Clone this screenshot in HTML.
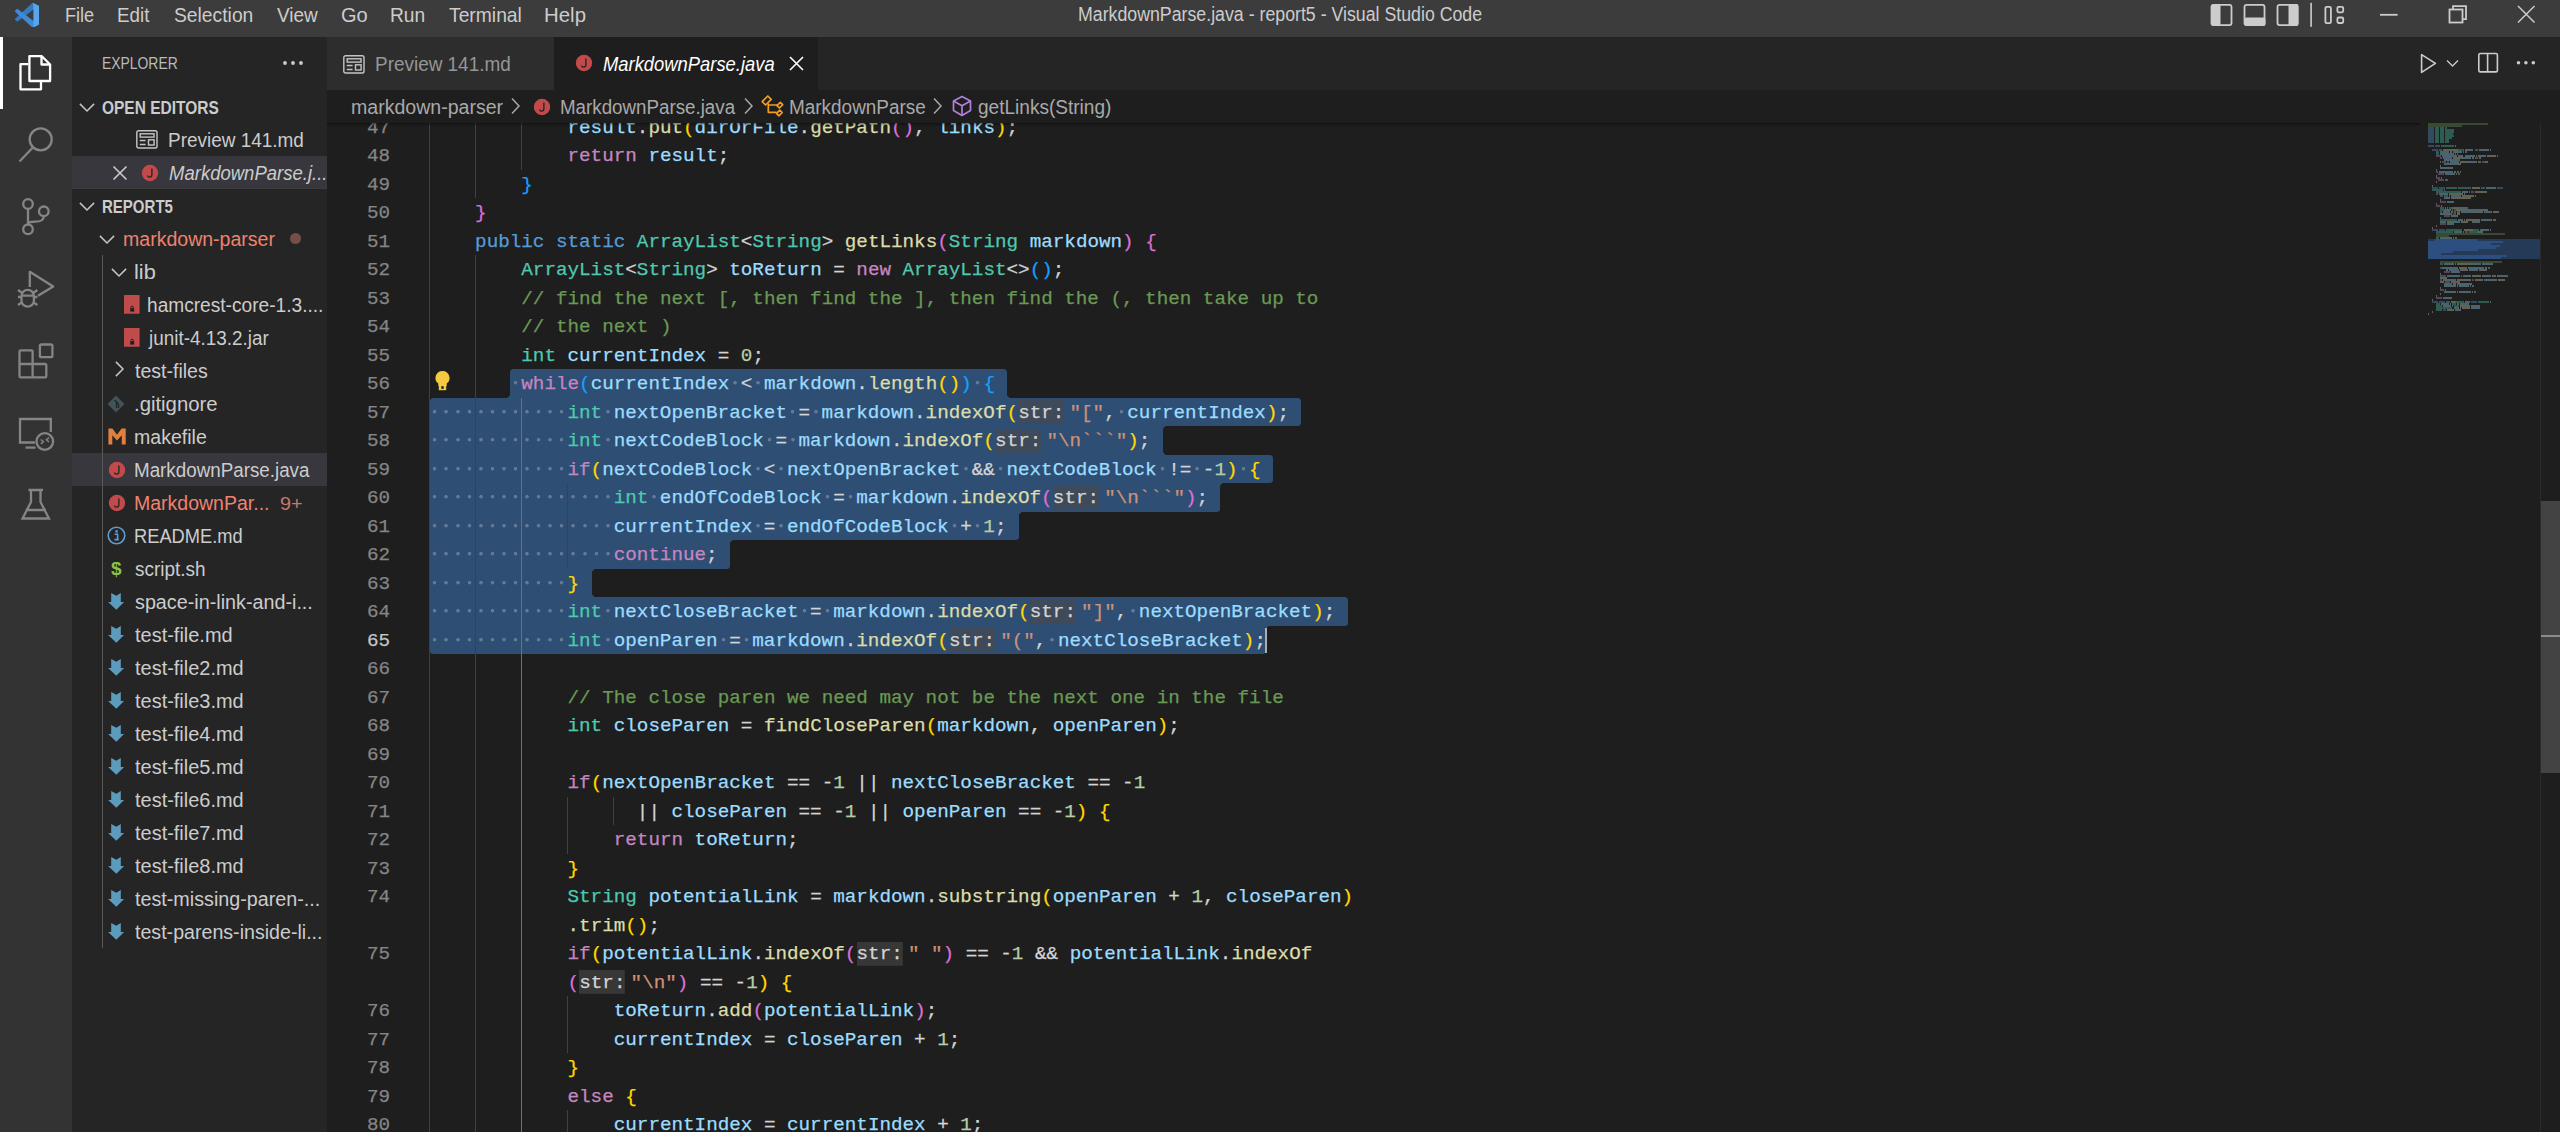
<!DOCTYPE html>
<html><head><meta charset="utf-8"><title>VS Code</title><style>
*{margin:0;padding:0;box-sizing:border-box}
html,body{width:2560px;height:1132px;overflow:hidden;background:#1e1e1e;font-family:"Liberation Sans", sans-serif}
.a{position:absolute}
.t{position:absolute;white-space:pre;font-family:"Liberation Sans", sans-serif}
#title{left:0;top:0;width:2560px;height:37px;background:#3c3c3c}
.menu{position:absolute;top:0;height:37px;line-height:37px;font-size:19px;color:#cccccc;white-space:pre}
#act{left:0;top:37px;width:72px;height:1095px;background:#333333}
#side{left:72px;top:37px;width:255px;height:1095px;background:#252526}
#tabs{left:327px;top:37px;width:2233px;height:53px;background:#252526}
#crumbs{left:327px;top:90px;width:2233px;height:33px;background:#1e1e1e}
.row{position:absolute;left:72px;width:255px;height:33px}
.rt{position:absolute;top:0;height:33px;line-height:33px;font-size:18.7px;color:#cccccc;white-space:pre}
.cl{position:absolute;left:428.9px;height:28.5px;line-height:28.5px;font-family:"Liberation Mono", monospace;font-size:19.25px;white-space:pre;color:#D4D4D4;-webkit-text-stroke:0.25px currentColor}
.ln{position:absolute;left:330px;width:60px;text-align:right;height:28.5px;line-height:28.5px;font-family:"Liberation Mono", monospace;font-size:19.25px;color:#858585;white-space:pre;-webkit-text-stroke:0.25px currentColor}
.ln.act{color:#c6c6c6}
.sel{position:absolute;height:28.5px;background:#2f4e74;border-radius:3px}
.ig{position:absolute;width:1px;background:#404040}
.ig.act{background:#707070}
.ws{display:inline-block;width:11.548px;height:28.5px;vertical-align:top;background:radial-gradient(circle at 50% 12.7px,rgba(200,205,215,0.34) 1.4px,rgba(200,205,215,0) 2.1px)}
.hint{display:inline-block;width:51.5px;height:28.5px;vertical-align:top;position:relative}
.hint i{position:absolute;left:0.2px;top:0;width:46px;height:28.5px;line-height:28.5px;font-style:normal;color:#d4d4d4;background:linear-gradient(rgba(72,72,72,0.6),rgba(72,72,72,0.6)) no-repeat 0 1.5px/45.8px 23.8px}
</style></head><body>
<div id="title" class="a">
<svg class="a" style="left:14.5px;top:2.8px" width="24.5" height="24.5" viewBox="0 0 100 100"><path fill="#3479c2" d="M96.4614 10.7962L75.8569 0.875542C73.4719 -0.272773 70.6217 0.211611 68.75 2.08333L1.29858 63.5832C-0.515693 65.2373 -0.513607 68.0937 1.30308 69.7452L6.81272 74.754C8.29793 76.1042 10.5347 76.2036 12.1338 74.9905L93.3609 13.3699C96.086 11.3026 100 13.2462 100 16.6667V16.4275C100 14.0265 98.6246 11.8378 96.4614 10.7962Z"/><path fill="#3f8ad6" d="M96.4614 89.2038L75.8569 99.1245C73.4719 100.273 70.6217 99.7884 68.75 97.9167L1.29858 36.4169C-0.515693 34.7627 -0.513607 31.9063 1.30308 30.2548L6.81272 25.246C8.29793 23.8958 10.5347 23.7964 12.1338 25.0095L93.3609 86.6301C96.086 88.6974 100 86.7538 100 83.3334V83.5726C100 85.9735 98.6246 88.1622 96.4614 89.2038Z"/><path fill="#58a6ee" d="M75.8578 99.1263C73.4721 100.274 70.6219 99.7885 68.75 97.9166C71.0564 100.223 75 98.5895 75 95.3278V4.67213C75 1.41039 71.0564 -0.223106 68.75 2.08329C70.6219 0.211402 73.4721 -0.273666 75.8578 0.873633L96.4587 10.7807C98.6234 11.8217 100 14.0112 100 16.4132V83.5871C100 85.9893 98.6234 88.1788 96.4586 89.2198L75.8578 99.1263Z"/></svg>
<div class="t" style="left:64.83px;top:4.51px;font-size:20.78px;line-height:1;color:#cccccc;transform:scaleX(0.8719);transform-origin:0 0;">File</div>
<div class="t" style="left:117.39px;top:4.51px;font-size:20.78px;line-height:1;color:#cccccc;transform:scaleX(0.9057);transform-origin:0 0;">Edit</div>
<div class="t" style="left:173.67px;top:4.51px;font-size:20.78px;line-height:1;color:#cccccc;transform:scaleX(0.9286);transform-origin:0 0;">Selection</div>
<div class="t" style="left:276.50px;top:4.51px;font-size:20.78px;line-height:1;color:#cccccc;transform:scaleX(0.9133);transform-origin:0 0;">View</div>
<div class="t" style="left:340.73px;top:4.51px;font-size:20.78px;line-height:1;color:#cccccc;transform:scaleX(0.9654);transform-origin:0 0;">Go</div>
<div class="t" style="left:389.97px;top:4.51px;font-size:20.78px;line-height:1;color:#cccccc;transform:scaleX(0.9250);transform-origin:0 0;">Run</div>
<div class="t" style="left:448.80px;top:4.51px;font-size:20.78px;line-height:1;color:#cccccc;transform:scaleX(0.9286);transform-origin:0 0;">Terminal</div>
<div class="t" style="left:543.92px;top:4.51px;font-size:20.78px;line-height:1;color:#cccccc;transform:scaleX(0.9829);transform-origin:0 0;">Help</div>
<div class="t" style="left:1077.98px;top:4.64px;font-size:19.33px;line-height:1;color:#cccccc;transform:scaleX(0.9182);transform-origin:0 0;">MarkdownParse.java - report5 - Visual Studio Code</div>
<svg class="a" style="left:2200px;top:0" width="360" height="37" viewBox="0 0 360 37">
<g fill="none" stroke="#cccccc" stroke-width="1.8">
<rect x="11.5" y="4.9" width="20" height="20.2" rx="2"/>
<rect x="44.5" y="4.9" width="20" height="20.2" rx="2"/>
<rect x="77.5" y="4.9" width="20" height="20.2" rx="2"/>
<rect x="125.4" y="6.8" width="5.5" height="16.3" rx="1.2"/>
<rect x="137.4" y="6.8" width="5.8" height="5.5" rx="1.2"/>
<rect x="137.4" y="17.5" width="5.8" height="5.5" rx="1.2"/>
<path d="M180 14.8h17.6M2517.8 5.9" />
<rect x="249.5" y="9.5" width="13" height="13"/>
<path d="M253 9.5V6.2h13v13h-3.3"/>
<path d="M318 6l16.5 16.5M334.5 6L318 22.5" stroke-width="1.5"/>
</g>
<g fill="#cccccc">
<rect x="11.5" y="4" width="9" height="22" rx="2"/>
<rect x="44.5" y="17.5" width="21" height="8.5" rx="2"/>
<rect x="88.5" y="4" width="10" height="22" rx="2"/>
<rect x="110.3" y="2.8" width="1.6" height="24"/>
</g>
</svg>
</div>
<div id="act" class="a">
<div class="a" style="left:0;top:0;width:3px;height:72px;background:#ffffff"></div>
<svg class="a" style="left:0;top:0" width="72" height="520" viewBox="0 37 72 520">
<g fill="none" stroke="#ffffff" stroke-width="2.3" stroke-linejoin="round">
<path d="M28.3 64.2 H20.5 V89.3 H41 V82"/>
<path d="M29.4 56.2 H41.8 L50.1 64.5 V81 H29.4 Z"/>
<path d="M41.5 56.5 V64.5 H49.8"/>
</g>
<g fill="none" stroke="#858585" stroke-width="2.3">
<circle cx="40.7" cy="139.4" r="11"/>
<path d="M32.8 147.5 L19.5 161.5"/>
<circle cx="28" cy="204" r="4.8"/>
<circle cx="28" cy="229.3" r="4.8"/>
<circle cx="43.8" cy="211.3" r="4.8"/>
<path d="M28 208.8 V224.5 M43.8 216.1 C43.8 221 40 221.7 35 221.7 C31 221.7 28 222.5 28 224.5"/>
<path d="M29.8 287 V271.8 L53.2 286.5 L38 295.8" stroke-linejoin="round"/>
<path d="M21.5 296 a6.2 6.2 0 0 1 12.4 0 v4.5 a6.2 6.2 0 0 1 -12.4 0 Z M18 297 h3.5 M33.9 297 h3.5 M18 305 l3.8 -2.5 M37.4 305 l-3.8 -2.5 M18 290 l3.5 2.5 M37.4 290 l-3.5 2.5 M21.8 295.6 H33.6"/>
<path d="M32.6 364 V351.5 a1.2 1.2 0 0 0 -1.2 -1.2 H20.7 a1.2 1.2 0 0 0 -1.2 1.2 V376.2 a1.2 1.2 0 0 0 1.2 1.2 H45.1 a1.2 1.2 0 0 0 1.2 -1.2 V365.2 a1.2 1.2 0 0 0 -1.2 -1.2 Z M19.5 364 H32.6 V377.4"/>
<rect x="39.9" y="344.5" width="12.5" height="12.7" rx="1.5"/>
<path d="M35 442.5 H20 V419 H50.8 V432" />
<path d="M25.5 447.6 H35.5" />
<circle cx="44.8" cy="441.5" r="8.3"/>
<path d="M40.8 439.5 l2.6 2.2 -2.6 2.2 M49 437.6 l-2.6 2.2 2.6 2.2" stroke-width="1.5"/>
<path d="M28.5 490 H43 M31 490 V502 L22.5 518.5 H49 L40.5 502 V490 M25.5 510 H46"/>
</g>
</svg>
</div>
<div id="side" class="a"></div>
<div class="t" style="left:101.98px;top:56.33px;font-size:16.86px;line-height:1;color:#bbbbbb;transform:scaleX(0.8244);transform-origin:0 0;">EXPLORER</div>
<svg class="a" style="left:280px;top:58px" width="26" height="10"><g fill="#cccccc"><circle cx="5" cy="5" r="1.9"/><circle cx="13" cy="5" r="1.9"/><circle cx="21" cy="5" r="1.9"/></g></svg>
<svg class="a" style="left:78.0px;top:101.0px" width="18" height="12"><path d="M1.9 2.9 L9 10 L16.1 2.9" fill="none" stroke="#c5c5c5" stroke-width="1.5"/></svg>
<div class="t" style="left:102.10px;top:99.14px;font-size:18.02px;line-height:1;color:#cccccc;font-weight:bold;transform:scaleX(0.8596);transform-origin:0 0;">OPEN EDITORS</div>
<svg class="a" style="left:136.4px;top:130.0px" width="22" height="19" viewBox="0 0 22 19"><g fill="none" stroke="#c5c5c5" stroke-width="1.4"><rect x="0.8" y="0.8" width="20.2" height="17.2" rx="1.8"/><rect x="4.2" y="3.8" width="13.8" height="3.3"/><rect x="12.5" y="9.8" width="5.6" height="5.2"/><path d="M3.8 10.5h5.8M3.8 14.5h5.8"/></g></svg>
<div class="t" style="left:167.72px;top:131.04px;font-size:19.33px;line-height:1;color:#cccccc;transform:scaleX(0.9803);transform-origin:0 0;">Preview 141.md</div>
<div class="a" style="left:72px;top:156px;width:255px;height:33px;background:#37373d"></div>
<svg class="a" style="left:112px;top:165.0px" width="16" height="16"><path d="M1.5 1.5L14.5 14.5M14.5 1.5L1.5 14.5" stroke="#cccccc" stroke-width="1.6"/></svg>
<svg class="a" style="left:141.0px;top:163.5px" width="18" height="18" viewBox="0 0 20 20"><circle cx="10" cy="10" r="9.1" fill="#c24a4a"/><path d="M12.1 5.6 V12 Q12.1 14.6 9.6 14.6 Q8.1 14.6 7.4 13.3" fill="none" stroke="#252526" stroke-width="1.5" stroke-linecap="round"/></svg>
<div class="t" style="left:168.50px;top:164.04px;font-size:19.33px;line-height:1;color:#cccccc;font-style:italic;transform:scaleX(0.9577);transform-origin:0 0;">MarkdownParse.j...</div>
<div class="a" style="left:72px;top:188px;width:255px;height:1px;background:#3c3c3c"></div>
<svg class="a" style="left:78.0px;top:200.0px" width="18" height="12"><path d="M1.9 2.9 L9 10 L16.1 2.9" fill="none" stroke="#c5c5c5" stroke-width="1.5"/></svg>
<div class="t" style="left:101.67px;top:198.14px;font-size:18.02px;line-height:1;color:#cccccc;font-weight:bold;transform:scaleX(0.8333);transform-origin:0 0;">REPORT5</div>
<svg class="a" style="left:97.5px;top:233.0px" width="18" height="12"><path d="M1.9 2.9 L9 10 L16.1 2.9" fill="none" stroke="#c5c5c5" stroke-width="1.5"/></svg>
<div class="t" style="left:123.39px;top:230.04px;font-size:19.33px;line-height:1;color:#f0826e;transform:scaleX(1.0107);transform-origin:0 0;">markdown-parser</div>
<div class="a" style="left:289.7px;top:232.7px;width:11.6px;height:11.6px;border-radius:50%;background:#744f49"></div>
<svg class="a" style="left:109.5px;top:266.0px" width="18" height="12"><path d="M1.9 2.9 L9 10 L16.1 2.9" fill="none" stroke="#c5c5c5" stroke-width="1.5"/></svg>
<div class="t" style="left:134.07px;top:263.04px;font-size:19.33px;line-height:1;color:#cccccc;transform:scaleX(1.1278);transform-origin:0 0;">lib</div>
<svg class="a" style="left:123.7px;top:295.0px" width="16" height="19"><rect x="0" y="0" width="15.6" height="18.8" rx="0.6" fill="#bf4b4b"/><rect x="6.2" y="13.2" width="4" height="3.4" fill="#1e1e1e"/><path d="M7 13.2v-0.8a1.2 1.2 0 0 1 2.4 0v0.8" stroke="#1e1e1e" stroke-width="1" fill="none"/></svg>
<div class="t" style="left:146.81px;top:296.04px;font-size:19.33px;line-height:1;color:#cccccc;transform:scaleX(0.9892);transform-origin:0 0;">hamcrest-core-1.3....</div>
<svg class="a" style="left:123.7px;top:328.0px" width="16" height="19"><rect x="0" y="0" width="15.6" height="18.8" rx="0.6" fill="#bf4b4b"/><rect x="6.2" y="13.2" width="4" height="3.4" fill="#1e1e1e"/><path d="M7 13.2v-0.8a1.2 1.2 0 0 1 2.4 0v0.8" stroke="#1e1e1e" stroke-width="1" fill="none"/></svg>
<div class="t" style="left:148.78px;top:329.04px;font-size:19.33px;line-height:1;color:#cccccc;transform:scaleX(0.9774);transform-origin:0 0;">junit-4.13.2.jar</div>
<svg class="a" style="left:112.5px;top:360.3px" width="12" height="18"><path d="M2.9 1.9 L10 9 L2.9 16.1" fill="none" stroke="#c5c5c5" stroke-width="1.5"/></svg>
<div class="t" style="left:135.20px;top:362.04px;font-size:19.33px;line-height:1;color:#cccccc;transform:scaleX(1.0111);transform-origin:0 0;">test-files</div>
<svg class="a" style="left:107px;top:394.5px" width="18" height="18"><path d="M9 0.5 L17.5 9 L9 17.5 L0.5 9Z" fill="#41535b"/><path d="M7.5 5 L11.5 9 V13 M9.5 7v6" stroke="#252526" stroke-width="1.3" fill="none"/></svg>
<div class="t" style="left:134.15px;top:395.04px;font-size:19.33px;line-height:1;color:#cccccc;transform:scaleX(1.0513);transform-origin:0 0;">.gitignore</div>
<svg class="a" style="left:107.5px;top:427.5px" width="19" height="18"><path d="M0.4 16.5V0.4H4.4L9 6.8L13.6 0.4H17.7V16.5H13.8V7.3L9 12.6L4.3 7.3V16.5Z" fill="#e0803f"/></svg>
<div class="t" style="left:134.19px;top:428.04px;font-size:19.33px;line-height:1;color:#cccccc;transform:scaleX(1.0113);transform-origin:0 0;">makefile</div>
<div class="a" style="left:72px;top:453px;width:255px;height:33px;background:#37373d"></div>
<svg class="a" style="left:107.5px;top:460.5px" width="18" height="18" viewBox="0 0 20 20"><circle cx="10" cy="10" r="9.1" fill="#c24a4a"/><path d="M12.1 5.6 V12 Q12.1 14.6 9.6 14.6 Q8.1 14.6 7.4 13.3" fill="none" stroke="#252526" stroke-width="1.5" stroke-linecap="round"/></svg>
<div class="t" style="left:134.23px;top:461.04px;font-size:19.33px;line-height:1;color:#cccccc;transform:scaleX(0.9722);transform-origin:0 0;">MarkdownParse.java</div>
<svg class="a" style="left:107.5px;top:493.5px" width="18" height="18" viewBox="0 0 20 20"><circle cx="10" cy="10" r="9.1" fill="#c24a4a"/><path d="M12.1 5.6 V12 Q12.1 14.6 9.6 14.6 Q8.1 14.6 7.4 13.3" fill="none" stroke="#252526" stroke-width="1.5" stroke-linecap="round"/></svg>
<div class="t" style="left:134.19px;top:494.04px;font-size:19.33px;line-height:1;color:#f0826e;transform:scaleX(1.0091);transform-origin:0 0;">MarkdownPar...</div>
<div class="t" style="left:279.91px;top:495.02px;font-size:18.17px;line-height:1;color:#c4786b;transform:scaleX(1.0895);transform-origin:0 0;">9+</div>
<svg class="a" style="left:106.8px;top:526.0px" width="19" height="19"><circle cx="9.5" cy="9.5" r="8.3" fill="none" stroke="#5d9bd0" stroke-width="1.6"/><path d="M7.6 8.2H10.6V13.6H11.8M7.4 13.6H11.6" fill="none" stroke="#5d9bd0" stroke-width="1.6"/><circle cx="9.6" cy="5.4" r="1.3" fill="#5d9bd0"/></svg>
<div class="t" style="left:134.25px;top:527.04px;font-size:19.33px;line-height:1;color:#cccccc;transform:scaleX(0.9451);transform-origin:0 0;">README.md</div>
<div class="t" style="left:111px;top:551.5px;font-size:19px;font-weight:bold;color:#8dc149;line-height:33px">$</div>
<div class="t" style="left:135.20px;top:560.04px;font-size:19.33px;line-height:1;color:#cccccc;transform:scaleX(0.9803);transform-origin:0 0;">script.sh</div>
<svg class="a" style="left:106px;top:590.0px" width="20" height="22" viewBox="106 590 20 22"><path d="M111.2 592.9 L116.3 595.8 L120.8 592.9 V602.1 H124.1 L116.3 609.8 L108.1 602.1 H111.2 Z" fill="#5d9bbd"/></svg>
<div class="t" style="left:135.20px;top:593.04px;font-size:19.33px;line-height:1;color:#cccccc;transform:scaleX(1.0220);transform-origin:0 0;">space-in-link-and-i...</div>
<svg class="a" style="left:106px;top:623.0px" width="20" height="22" viewBox="106 590 20 22"><path d="M111.2 592.9 L116.3 595.8 L120.8 592.9 V602.1 H124.1 L116.3 609.8 L108.1 602.1 H111.2 Z" fill="#5d9bbd"/></svg>
<div class="t" style="left:135.20px;top:626.04px;font-size:19.33px;line-height:1;color:#cccccc;transform:scaleX(1.0330);transform-origin:0 0;">test-file.md</div>
<svg class="a" style="left:106px;top:656.0px" width="20" height="22" viewBox="106 590 20 22"><path d="M111.2 592.9 L116.3 595.8 L120.8 592.9 V602.1 H124.1 L116.3 609.8 L108.1 602.1 H111.2 Z" fill="#5d9bbd"/></svg>
<div class="t" style="left:135.20px;top:659.04px;font-size:19.33px;line-height:1;color:#cccccc;transform:scaleX(1.0327);transform-origin:0 0;">test-file2.md</div>
<svg class="a" style="left:106px;top:689.0px" width="20" height="22" viewBox="106 590 20 22"><path d="M111.2 592.9 L116.3 595.8 L120.8 592.9 V602.1 H124.1 L116.3 609.8 L108.1 602.1 H111.2 Z" fill="#5d9bbd"/></svg>
<div class="t" style="left:135.20px;top:692.04px;font-size:19.33px;line-height:1;color:#cccccc;transform:scaleX(1.0327);transform-origin:0 0;">test-file3.md</div>
<svg class="a" style="left:106px;top:722.0px" width="20" height="22" viewBox="106 590 20 22"><path d="M111.2 592.9 L116.3 595.8 L120.8 592.9 V602.1 H124.1 L116.3 609.8 L108.1 602.1 H111.2 Z" fill="#5d9bbd"/></svg>
<div class="t" style="left:135.20px;top:725.04px;font-size:19.33px;line-height:1;color:#cccccc;transform:scaleX(1.0327);transform-origin:0 0;">test-file4.md</div>
<svg class="a" style="left:106px;top:755.0px" width="20" height="22" viewBox="106 590 20 22"><path d="M111.2 592.9 L116.3 595.8 L120.8 592.9 V602.1 H124.1 L116.3 609.8 L108.1 602.1 H111.2 Z" fill="#5d9bbd"/></svg>
<div class="t" style="left:135.20px;top:758.04px;font-size:19.33px;line-height:1;color:#cccccc;transform:scaleX(1.0327);transform-origin:0 0;">test-file5.md</div>
<svg class="a" style="left:106px;top:788.0px" width="20" height="22" viewBox="106 590 20 22"><path d="M111.2 592.9 L116.3 595.8 L120.8 592.9 V602.1 H124.1 L116.3 609.8 L108.1 602.1 H111.2 Z" fill="#5d9bbd"/></svg>
<div class="t" style="left:135.20px;top:791.04px;font-size:19.33px;line-height:1;color:#cccccc;transform:scaleX(1.0327);transform-origin:0 0;">test-file6.md</div>
<svg class="a" style="left:106px;top:821.0px" width="20" height="22" viewBox="106 590 20 22"><path d="M111.2 592.9 L116.3 595.8 L120.8 592.9 V602.1 H124.1 L116.3 609.8 L108.1 602.1 H111.2 Z" fill="#5d9bbd"/></svg>
<div class="t" style="left:135.20px;top:824.04px;font-size:19.33px;line-height:1;color:#cccccc;transform:scaleX(1.0327);transform-origin:0 0;">test-file7.md</div>
<svg class="a" style="left:106px;top:854.0px" width="20" height="22" viewBox="106 590 20 22"><path d="M111.2 592.9 L116.3 595.8 L120.8 592.9 V602.1 H124.1 L116.3 609.8 L108.1 602.1 H111.2 Z" fill="#5d9bbd"/></svg>
<div class="t" style="left:135.20px;top:857.04px;font-size:19.33px;line-height:1;color:#cccccc;transform:scaleX(1.0327);transform-origin:0 0;">test-file8.md</div>
<svg class="a" style="left:106px;top:887.0px" width="20" height="22" viewBox="106 590 20 22"><path d="M111.2 592.9 L116.3 595.8 L120.8 592.9 V602.1 H124.1 L116.3 609.8 L108.1 602.1 H111.2 Z" fill="#5d9bbd"/></svg>
<div class="t" style="left:135.20px;top:890.04px;font-size:19.33px;line-height:1;color:#cccccc;transform:scaleX(1.0206);transform-origin:0 0;">test-missing-paren-...</div>
<svg class="a" style="left:106px;top:920.0px" width="20" height="22" viewBox="106 590 20 22"><path d="M111.2 592.9 L116.3 595.8 L120.8 592.9 V602.1 H124.1 L116.3 609.8 L108.1 602.1 H111.2 Z" fill="#5d9bbd"/></svg>
<div class="t" style="left:135.20px;top:923.04px;font-size:19.33px;line-height:1;color:#cccccc;transform:scaleX(1.0147);transform-origin:0 0;">test-parens-inside-li...</div>
<div class="a" style="left:102px;top:255px;width:1px;height:693px;background:#585858"></div>
<div id="tabs" class="a"></div>
<div class="a" style="left:327px;top:37px;width:227px;height:53px;background:#2d2d2d"></div>
<svg class="a" style="left:343.3px;top:54.5px" width="22" height="19" viewBox="0 0 22 19"><g fill="none" stroke="#c5c5c5" stroke-width="1.4"><rect x="0.8" y="0.8" width="20.2" height="17.2" rx="1.8"/><rect x="4.2" y="3.8" width="13.8" height="3.3"/><rect x="12.5" y="9.8" width="5.6" height="5.2"/><path d="M3.8 10.5h5.8M3.8 14.5h5.8"/></g></svg>
<div class="t" style="left:374.96px;top:53.82px;font-size:20.06px;line-height:1;color:#969696;transform:scaleX(0.9444);transform-origin:0 0;">Preview 141.md</div>
<div class="a" style="left:554px;top:37px;width:264px;height:53px;background:#1e1e1e"></div>
<svg class="a" style="left:575.0px;top:54.0px" width="18" height="18" viewBox="0 0 20 20"><circle cx="10" cy="10" r="9.1" fill="#c24a4a"/><path d="M12.1 5.6 V12 Q12.1 14.6 9.6 14.6 Q8.1 14.6 7.4 13.3" fill="none" stroke="#252526" stroke-width="1.5" stroke-linecap="round"/></svg>
<div class="t" style="left:603.00px;top:53.82px;font-size:20.06px;line-height:1;color:#ffffff;font-style:italic;transform:scaleX(0.9171);transform-origin:0 0;">MarkdownParse.java</div>
<svg class="a" style="left:789px;top:56px" width="15" height="15"><path d="M1 1L14 14M14 1L1 14" stroke="#ffffff" stroke-width="1.6"/></svg>
<svg class="a" style="left:2400px;top:37px" width="160" height="53" viewBox="0 0 160 53"><g fill="none" stroke="#cccccc" stroke-width="1.7" stroke-linejoin="round">
<path d="M21.6 17.6 V35.4 L35.4 26.4 Z" stroke-width="1.6"/>
<path d="M47 23.5 L52.5 29 L58 23.5" stroke-width="1.3"/>
<rect x="78.8" y="16.5" width="18.6" height="18.4" rx="1.5" stroke-width="1.6"/><path d="M87.6 16.5V34.9" stroke-width="1.6"/>
</g><g fill="#cccccc"><circle cx="118.5" cy="25.8" r="1.75"/><circle cx="125.9" cy="25.8" r="1.75"/><circle cx="133.3" cy="25.8" r="1.75"/></g></svg>
<div id="crumbs" class="a"></div>
<div class="t" style="left:350.64px;top:96.67px;font-size:20.35px;line-height:1;color:#a9a9a9;transform:scaleX(0.9611);transform-origin:0 0;">markdown-parser</div>
<svg class="a" style="left:510.0px;top:97px" width="12" height="18"><path d="M2 1.5 L9 9 L2 16.5" fill="none" stroke="#a9a9a9" stroke-width="1.5"/></svg>
<svg class="a" style="left:533.0px;top:97.5px" width="18" height="18" viewBox="0 0 20 20"><circle cx="10" cy="10" r="9.1" fill="#c24a4a"/><path d="M12.1 5.6 V12 Q12.1 14.6 9.6 14.6 Q8.1 14.6 7.4 13.3" fill="none" stroke="#252526" stroke-width="1.5" stroke-linecap="round"/></svg>
<div class="t" style="left:560.48px;top:96.67px;font-size:20.35px;line-height:1;color:#a9a9a9;transform:scaleX(0.9217);transform-origin:0 0;">MarkdownParse.java</div>
<svg class="a" style="left:742.5px;top:97px" width="12" height="18"><path d="M2 1.5 L9 9 L2 16.5" fill="none" stroke="#a9a9a9" stroke-width="1.5"/></svg>
<svg class="a" style="left:755px;top:92px" width="35" height="28" viewBox="755 92 35 28"><g fill="none" stroke="#ee9d28" stroke-width="1.7" stroke-linejoin="round">
<path d="M762.2 101.6 L767.8 96 L771.2 99.4 L765.6 105 Z"/>
<path d="M777 105.6 L780.3 102.3 L782.7 104.7 L779.4 108 Z"/>
<path d="M776.5 113.4 L779.8 110.1 L782.2 112.5 L778.9 115.8 Z"/>
<path d="M768.3 103.2 V112.3 H776.6 M768.3 105 H777.6"/></g></svg>
<div class="t" style="left:788.57px;top:96.67px;font-size:20.35px;line-height:1;color:#a9a9a9;transform:scaleX(0.9308);transform-origin:0 0;">MarkdownParse</div>
<svg class="a" style="left:932.0px;top:97px" width="12" height="18"><path d="M2 1.5 L9 9 L2 16.5" fill="none" stroke="#a9a9a9" stroke-width="1.5"/></svg>
<svg class="a" style="left:952px;top:95px" width="20" height="22" viewBox="0 0 20 22"><g fill="none" stroke="#b180d7" stroke-width="1.7" stroke-linejoin="round">
<path d="M10 1.5 L18.5 6 V15.5 L10 20.5 L1.5 15.5 V6 Z"/><path d="M1.5 6 L10 10.8 L18.5 6 M10 10.8 V20.5"/></g></svg>
<div class="t" style="left:978.06px;top:96.67px;font-size:20.35px;line-height:1;color:#a9a9a9;transform:scaleX(0.9362);transform-origin:0 0;">getLinks(String)</div>
<div class="a" style="left:327px;top:123px;width:2233px;height:1009px;overflow:hidden">
<div class="a" style="left:-327px;top:-123px;width:2560px;height:1132px">
<div class="sel" style="left:509.7px;top:369.20px;width:497.5px;border-radius:3.5px 3.5px 0.0px 0.0px"></div><div class="sel" style="left:430.0px;top:397.70px;width:871.3px;border-radius:3.5px 3.5px 3.5px 0.0px"></div><div class="sel" style="left:430.0px;top:426.20px;width:732.7px;border-radius:0.0px 0.0px 0.0px 0.0px"></div><div class="sel" style="left:430.0px;top:454.70px;width:842.9px;border-radius:0.0px 3.5px 3.5px 0.0px"></div><div class="sel" style="left:430.0px;top:483.20px;width:790.4px;border-radius:0.0px 0.0px 3.5px 0.0px"></div><div class="sel" style="left:430.0px;top:511.70px;width:588.8px;border-radius:0.0px 0.0px 3.5px 0.0px"></div><div class="sel" style="left:430.0px;top:540.20px;width:300.1px;border-radius:0.0px 0.0px 3.5px 0.0px"></div><div class="sel" style="left:430.0px;top:568.70px;width:161.5px;border-radius:0.0px 0.0px 0.0px 0.0px"></div><div class="sel" style="left:430.0px;top:597.20px;width:917.5px;border-radius:0.0px 3.5px 3.5px 0.0px"></div><div class="sel" style="left:430.0px;top:625.70px;width:835.7px;border-radius:0.0px 0.0px 3.5px 3.5px"></div><div class="a" style="left:1007.3px;top:392.70px;width:5px;height:5px;background:radial-gradient(circle at 100% 0%,rgba(0,0,0,0) 5px,#2f4e74 5.6px)"></div><div class="a" style="left:504.7px;top:392.70px;width:5px;height:5px;background:radial-gradient(circle at 0% 0%,rgba(0,0,0,0) 5px,#2f4e74 5.6px)"></div><div class="a" style="left:1162.7px;top:426.20px;width:5px;height:5px;background:radial-gradient(circle at 100% 100%,rgba(0,0,0,0) 5px,#2f4e74 5.6px)"></div><div class="a" style="left:1162.7px;top:449.70px;width:5px;height:5px;background:radial-gradient(circle at 100% 0%,rgba(0,0,0,0) 5px,#2f4e74 5.6px)"></div><div class="a" style="left:1220.4px;top:483.20px;width:5px;height:5px;background:radial-gradient(circle at 100% 100%,rgba(0,0,0,0) 5px,#2f4e74 5.6px)"></div><div class="a" style="left:1018.8px;top:511.70px;width:5px;height:5px;background:radial-gradient(circle at 100% 100%,rgba(0,0,0,0) 5px,#2f4e74 5.6px)"></div><div class="a" style="left:730.1px;top:540.20px;width:5px;height:5px;background:radial-gradient(circle at 100% 100%,rgba(0,0,0,0) 5px,#2f4e74 5.6px)"></div><div class="a" style="left:591.5px;top:568.70px;width:5px;height:5px;background:radial-gradient(circle at 100% 100%,rgba(0,0,0,0) 5px,#2f4e74 5.6px)"></div><div class="a" style="left:591.5px;top:592.20px;width:5px;height:5px;background:radial-gradient(circle at 100% 0%,rgba(0,0,0,0) 5px,#2f4e74 5.6px)"></div><div class="a" style="left:1265.7px;top:625.70px;width:5px;height:5px;background:radial-gradient(circle at 100% 100%,rgba(0,0,0,0) 5px,#2f4e74 5.6px)"></div>
<div class="ig" style="left:429px;top:112.70px;height:1054.50px"></div><div class="ig" style="left:475px;top:112.70px;height:85.50px"></div><div class="ig" style="left:521px;top:112.70px;height:57.00px"></div><div class="ig" style="left:475px;top:255.20px;height:912.00px"></div><div class="ig act" style="left:521px;top:397.70px;height:769.50px"></div><div class="ig" style="left:567px;top:483.20px;height:85.50px"></div><div class="ig" style="left:567px;top:796.70px;height:57.00px"></div><div class="ig" style="left:613px;top:796.70px;height:28.50px"></div><div class="ig" style="left:567px;top:996.20px;height:57.00px"></div><div class="ig" style="left:567px;top:1110.20px;height:28.50px"></div>
<div class="ln" style="top:113.60px">47</div><div class="ln" style="top:142.10px">48</div><div class="ln" style="top:170.60px">49</div><div class="ln" style="top:199.10px">50</div><div class="ln" style="top:227.60px">51</div><div class="ln" style="top:256.10px">52</div><div class="ln" style="top:284.60px">53</div><div class="ln" style="top:313.10px">54</div><div class="ln" style="top:341.60px">55</div><div class="ln" style="top:370.10px">56</div><div class="ln" style="top:398.60px">57</div><div class="ln" style="top:427.10px">58</div><div class="ln" style="top:455.60px">59</div><div class="ln" style="top:484.10px">60</div><div class="ln" style="top:512.60px">61</div><div class="ln" style="top:541.10px">62</div><div class="ln" style="top:569.60px">63</div><div class="ln" style="top:598.10px">64</div><div class="ln act" style="top:626.60px">65</div><div class="ln" style="top:655.10px">66</div><div class="ln" style="top:683.60px">67</div><div class="ln" style="top:712.10px">68</div><div class="ln" style="top:740.60px">69</div><div class="ln" style="top:769.10px">70</div><div class="ln" style="top:797.60px">71</div><div class="ln" style="top:826.10px">72</div><div class="ln" style="top:854.60px">73</div><div class="ln" style="top:883.10px">74</div><div class="ln" style="top:940.10px">75</div><div class="ln" style="top:997.10px">76</div><div class="ln" style="top:1025.60px">77</div><div class="ln" style="top:1054.10px">78</div><div class="ln" style="top:1082.60px">79</div><div class="ln" style="top:1111.10px">80</div><div class="ln" style="top:1139.60px">81</div>
<div class="cl" style="top:113.80px"><span style="color:#D4D4D4">            </span><span style="color:#9CDCFE">result</span><span style="color:#D4D4D4">.</span><span style="color:#DCDCAA">put</span><span style="color:#FFD700">(</span><span style="color:#9CDCFE">dirOrFile</span><span style="color:#D4D4D4">.</span><span style="color:#DCDCAA">getPath</span><span style="color:#DA70D6">()</span><span style="color:#D4D4D4">, </span><span style="color:#9CDCFE">links</span><span style="color:#FFD700">)</span><span style="color:#D4D4D4">;</span></div><div class="cl" style="top:142.30px"><span style="color:#D4D4D4">            </span><span style="color:#C586C0">return</span><span style="color:#D4D4D4"> </span><span style="color:#9CDCFE">result</span><span style="color:#D4D4D4">;</span></div><div class="cl" style="top:170.80px"><span style="color:#D4D4D4">        </span><span style="color:#179FFF">}</span></div><div class="cl" style="top:199.30px"><span style="color:#D4D4D4">    </span><span style="color:#DA70D6">}</span></div><div class="cl" style="top:227.80px"><span style="color:#D4D4D4">    </span><span style="color:#569CD6">public</span><span style="color:#D4D4D4"> </span><span style="color:#569CD6">static</span><span style="color:#D4D4D4"> </span><span style="color:#4EC9B0">ArrayList</span><span style="color:#D4D4D4">&lt;</span><span style="color:#4EC9B0">String</span><span style="color:#D4D4D4">&gt; </span><span style="color:#DCDCAA">getLinks</span><span style="color:#DA70D6">(</span><span style="color:#4EC9B0">String</span><span style="color:#D4D4D4"> </span><span style="color:#9CDCFE">markdown</span><span style="color:#DA70D6">)</span><span style="color:#D4D4D4"> </span><span style="color:#DA70D6">{</span></div><div class="cl" style="top:256.30px"><span style="color:#D4D4D4">        </span><span style="color:#4EC9B0">ArrayList</span><span style="color:#D4D4D4">&lt;</span><span style="color:#4EC9B0">String</span><span style="color:#D4D4D4">&gt; </span><span style="color:#9CDCFE">toReturn</span><span style="color:#D4D4D4"> = </span><span style="color:#C586C0">new</span><span style="color:#D4D4D4"> </span><span style="color:#4EC9B0">ArrayList</span><span style="color:#D4D4D4">&lt;&gt;</span><span style="color:#179FFF">()</span><span style="color:#D4D4D4">;</span></div><div class="cl" style="top:284.80px"><span style="color:#D4D4D4">        </span><span style="color:#6A9955">// find the next [, then find the ], then find the (, then take up to</span></div><div class="cl" style="top:313.30px"><span style="color:#D4D4D4">        </span><span style="color:#6A9955">// the next )</span></div><div class="cl" style="top:341.80px"><span style="color:#D4D4D4">        </span><span style="color:#4EC9B0">int</span><span style="color:#D4D4D4"> </span><span style="color:#9CDCFE">currentIndex</span><span style="color:#D4D4D4"> = </span><span style="color:#B5CEA8">0</span><span style="color:#D4D4D4">;</span></div><div class="cl" style="top:370.30px"><span style="color:#D4D4D4">       </span><span class="ws"></span><span style="color:#C586C0">while</span><span style="color:#179FFF">(</span><span style="color:#9CDCFE">currentIndex</span><span class="ws"></span><span style="color:#D4D4D4">&lt;</span><span class="ws"></span><span style="color:#9CDCFE">markdown</span><span style="color:#D4D4D4">.</span><span style="color:#DCDCAA">length</span><span style="color:#FFD700">()</span><span style="color:#179FFF">)</span><span class="ws"></span><span style="color:#179FFF">{</span></div><div class="cl" style="top:398.80px"><span class="ws"></span><span class="ws"></span><span class="ws"></span><span class="ws"></span><span class="ws"></span><span class="ws"></span><span class="ws"></span><span class="ws"></span><span class="ws"></span><span class="ws"></span><span class="ws"></span><span class="ws"></span><span style="color:#4EC9B0">int</span><span class="ws"></span><span style="color:#9CDCFE">nextOpenBracket</span><span class="ws"></span><span style="color:#D4D4D4">=</span><span class="ws"></span><span style="color:#9CDCFE">markdown</span><span style="color:#D4D4D4">.</span><span style="color:#DCDCAA">indexOf</span><span style="color:#FFD700">(</span><span class="hint"><i>str:</i></span><span style="color:#CE9178">"["</span><span style="color:#D4D4D4">,</span><span class="ws"></span><span style="color:#9CDCFE">currentIndex</span><span style="color:#FFD700">)</span><span style="color:#D4D4D4">;</span></div><div class="cl" style="top:427.30px"><span class="ws"></span><span class="ws"></span><span class="ws"></span><span class="ws"></span><span class="ws"></span><span class="ws"></span><span class="ws"></span><span class="ws"></span><span class="ws"></span><span class="ws"></span><span class="ws"></span><span class="ws"></span><span style="color:#4EC9B0">int</span><span class="ws"></span><span style="color:#9CDCFE">nextCodeBlock</span><span class="ws"></span><span style="color:#D4D4D4">=</span><span class="ws"></span><span style="color:#9CDCFE">markdown</span><span style="color:#D4D4D4">.</span><span style="color:#DCDCAA">indexOf</span><span style="color:#FFD700">(</span><span class="hint"><i>str:</i></span><span style="color:#CE9178">"\n```"</span><span style="color:#FFD700">)</span><span style="color:#D4D4D4">;</span></div><div class="cl" style="top:455.80px"><span class="ws"></span><span class="ws"></span><span class="ws"></span><span class="ws"></span><span class="ws"></span><span class="ws"></span><span class="ws"></span><span class="ws"></span><span class="ws"></span><span class="ws"></span><span class="ws"></span><span class="ws"></span><span style="color:#C586C0">if</span><span style="color:#FFD700">(</span><span style="color:#9CDCFE">nextCodeBlock</span><span class="ws"></span><span style="color:#D4D4D4">&lt;</span><span class="ws"></span><span style="color:#9CDCFE">nextOpenBracket</span><span class="ws"></span><span style="color:#D4D4D4">&amp;&amp;</span><span class="ws"></span><span style="color:#9CDCFE">nextCodeBlock</span><span class="ws"></span><span style="color:#D4D4D4">!=</span><span class="ws"></span><span style="color:#D4D4D4">-</span><span style="color:#B5CEA8">1</span><span style="color:#FFD700">)</span><span class="ws"></span><span style="color:#FFD700">{</span></div><div class="cl" style="top:484.30px"><span class="ws"></span><span class="ws"></span><span class="ws"></span><span class="ws"></span><span class="ws"></span><span class="ws"></span><span class="ws"></span><span class="ws"></span><span class="ws"></span><span class="ws"></span><span class="ws"></span><span class="ws"></span><span class="ws"></span><span class="ws"></span><span class="ws"></span><span class="ws"></span><span style="color:#4EC9B0">int</span><span class="ws"></span><span style="color:#9CDCFE">endOfCodeBlock</span><span class="ws"></span><span style="color:#D4D4D4">=</span><span class="ws"></span><span style="color:#9CDCFE">markdown</span><span style="color:#D4D4D4">.</span><span style="color:#DCDCAA">indexOf</span><span style="color:#DA70D6">(</span><span class="hint"><i>str:</i></span><span style="color:#CE9178">"\n```"</span><span style="color:#DA70D6">)</span><span style="color:#D4D4D4">;</span></div><div class="cl" style="top:512.80px"><span class="ws"></span><span class="ws"></span><span class="ws"></span><span class="ws"></span><span class="ws"></span><span class="ws"></span><span class="ws"></span><span class="ws"></span><span class="ws"></span><span class="ws"></span><span class="ws"></span><span class="ws"></span><span class="ws"></span><span class="ws"></span><span class="ws"></span><span class="ws"></span><span style="color:#9CDCFE">currentIndex</span><span class="ws"></span><span style="color:#D4D4D4">=</span><span class="ws"></span><span style="color:#9CDCFE">endOfCodeBlock</span><span class="ws"></span><span style="color:#D4D4D4">+</span><span class="ws"></span><span style="color:#B5CEA8">1</span><span style="color:#D4D4D4">;</span></div><div class="cl" style="top:541.30px"><span class="ws"></span><span class="ws"></span><span class="ws"></span><span class="ws"></span><span class="ws"></span><span class="ws"></span><span class="ws"></span><span class="ws"></span><span class="ws"></span><span class="ws"></span><span class="ws"></span><span class="ws"></span><span class="ws"></span><span class="ws"></span><span class="ws"></span><span class="ws"></span><span style="color:#C586C0">continue</span><span style="color:#D4D4D4">;</span></div><div class="cl" style="top:569.80px"><span class="ws"></span><span class="ws"></span><span class="ws"></span><span class="ws"></span><span class="ws"></span><span class="ws"></span><span class="ws"></span><span class="ws"></span><span class="ws"></span><span class="ws"></span><span class="ws"></span><span class="ws"></span><span style="color:#FFD700">}</span></div><div class="cl" style="top:598.30px"><span class="ws"></span><span class="ws"></span><span class="ws"></span><span class="ws"></span><span class="ws"></span><span class="ws"></span><span class="ws"></span><span class="ws"></span><span class="ws"></span><span class="ws"></span><span class="ws"></span><span class="ws"></span><span style="color:#4EC9B0">int</span><span class="ws"></span><span style="color:#9CDCFE">nextCloseBracket</span><span class="ws"></span><span style="color:#D4D4D4">=</span><span class="ws"></span><span style="color:#9CDCFE">markdown</span><span style="color:#D4D4D4">.</span><span style="color:#DCDCAA">indexOf</span><span style="color:#FFD700">(</span><span class="hint"><i>str:</i></span><span style="color:#CE9178">"]"</span><span style="color:#D4D4D4">,</span><span class="ws"></span><span style="color:#9CDCFE">nextOpenBracket</span><span style="color:#FFD700">)</span><span style="color:#D4D4D4">;</span></div><div class="cl" style="top:626.80px"><span class="ws"></span><span class="ws"></span><span class="ws"></span><span class="ws"></span><span class="ws"></span><span class="ws"></span><span class="ws"></span><span class="ws"></span><span class="ws"></span><span class="ws"></span><span class="ws"></span><span class="ws"></span><span style="color:#4EC9B0">int</span><span class="ws"></span><span style="color:#9CDCFE">openParen</span><span class="ws"></span><span style="color:#D4D4D4">=</span><span class="ws"></span><span style="color:#9CDCFE">markdown</span><span style="color:#D4D4D4">.</span><span style="color:#DCDCAA">indexOf</span><span style="color:#FFD700">(</span><span class="hint"><i>str:</i></span><span style="color:#CE9178">"("</span><span style="color:#D4D4D4">,</span><span class="ws"></span><span style="color:#9CDCFE">nextCloseBracket</span><span style="color:#FFD700">)</span><span style="color:#D4D4D4">;</span></div><div class="cl" style="top:655.30px"></div><div class="cl" style="top:683.80px"><span style="color:#D4D4D4">            </span><span style="color:#6A9955">// The close paren we need may not be the next one in the file</span></div><div class="cl" style="top:712.30px"><span style="color:#D4D4D4">            </span><span style="color:#4EC9B0">int</span><span style="color:#D4D4D4"> </span><span style="color:#9CDCFE">closeParen</span><span style="color:#D4D4D4"> = </span><span style="color:#DCDCAA">findCloseParen</span><span style="color:#FFD700">(</span><span style="color:#9CDCFE">markdown</span><span style="color:#D4D4D4">, </span><span style="color:#9CDCFE">openParen</span><span style="color:#FFD700">)</span><span style="color:#D4D4D4">;</span></div><div class="cl" style="top:740.80px"></div><div class="cl" style="top:769.30px"><span style="color:#D4D4D4">            </span><span style="color:#C586C0">if</span><span style="color:#FFD700">(</span><span style="color:#9CDCFE">nextOpenBracket</span><span style="color:#D4D4D4"> == -</span><span style="color:#B5CEA8">1</span><span style="color:#D4D4D4"> || </span><span style="color:#9CDCFE">nextCloseBracket</span><span style="color:#D4D4D4"> == -</span><span style="color:#B5CEA8">1</span></div><div class="cl" style="top:797.80px"><span style="color:#D4D4D4">                  || </span><span style="color:#9CDCFE">closeParen</span><span style="color:#D4D4D4"> == -</span><span style="color:#B5CEA8">1</span><span style="color:#D4D4D4"> || </span><span style="color:#9CDCFE">openParen</span><span style="color:#D4D4D4"> == -</span><span style="color:#B5CEA8">1</span><span style="color:#FFD700">)</span><span style="color:#D4D4D4"> </span><span style="color:#FFD700">{</span></div><div class="cl" style="top:826.30px"><span style="color:#D4D4D4">                </span><span style="color:#C586C0">return</span><span style="color:#D4D4D4"> </span><span style="color:#9CDCFE">toReturn</span><span style="color:#D4D4D4">;</span></div><div class="cl" style="top:854.80px"><span style="color:#D4D4D4">            </span><span style="color:#FFD700">}</span></div><div class="cl" style="top:883.30px"><span style="color:#D4D4D4">            </span><span style="color:#4EC9B0">String</span><span style="color:#D4D4D4"> </span><span style="color:#9CDCFE">potentialLink</span><span style="color:#D4D4D4"> = </span><span style="color:#9CDCFE">markdown</span><span style="color:#D4D4D4">.</span><span style="color:#DCDCAA">substring</span><span style="color:#FFD700">(</span><span style="color:#9CDCFE">openParen</span><span style="color:#D4D4D4"> + </span><span style="color:#B5CEA8">1</span><span style="color:#D4D4D4">, </span><span style="color:#9CDCFE">closeParen</span><span style="color:#FFD700">)</span></div><div class="cl" style="top:911.80px"><span style="color:#D4D4D4">            .</span><span style="color:#DCDCAA">trim</span><span style="color:#FFD700">()</span><span style="color:#D4D4D4">;</span></div><div class="cl" style="top:940.30px"><span style="color:#D4D4D4">            </span><span style="color:#C586C0">if</span><span style="color:#FFD700">(</span><span style="color:#9CDCFE">potentialLink</span><span style="color:#D4D4D4">.</span><span style="color:#DCDCAA">indexOf</span><span style="color:#DA70D6">(</span><span class="hint"><i>str:</i></span><span style="color:#CE9178">" "</span><span style="color:#DA70D6">)</span><span style="color:#D4D4D4"> == -</span><span style="color:#B5CEA8">1</span><span style="color:#D4D4D4"> &amp;&amp; </span><span style="color:#9CDCFE">potentialLink</span><span style="color:#D4D4D4">.</span><span style="color:#DCDCAA">indexOf</span></div><div class="cl" style="top:968.80px"><span style="color:#D4D4D4">            </span><span style="color:#DA70D6">(</span><span class="hint"><i>str:</i></span><span style="color:#CE9178">"\n"</span><span style="color:#DA70D6">)</span><span style="color:#D4D4D4"> == -</span><span style="color:#B5CEA8">1</span><span style="color:#FFD700">)</span><span style="color:#D4D4D4"> </span><span style="color:#FFD700">{</span></div><div class="cl" style="top:997.30px"><span style="color:#D4D4D4">                </span><span style="color:#9CDCFE">toReturn</span><span style="color:#D4D4D4">.</span><span style="color:#DCDCAA">add</span><span style="color:#DA70D6">(</span><span style="color:#9CDCFE">potentialLink</span><span style="color:#DA70D6">)</span><span style="color:#D4D4D4">;</span></div><div class="cl" style="top:1025.80px"><span style="color:#D4D4D4">                </span><span style="color:#9CDCFE">currentIndex</span><span style="color:#D4D4D4"> = </span><span style="color:#9CDCFE">closeParen</span><span style="color:#D4D4D4"> + </span><span style="color:#B5CEA8">1</span><span style="color:#D4D4D4">;</span></div><div class="cl" style="top:1054.30px"><span style="color:#D4D4D4">            </span><span style="color:#FFD700">}</span></div><div class="cl" style="top:1082.80px"><span style="color:#D4D4D4">            </span><span style="color:#C586C0">else</span><span style="color:#D4D4D4"> </span><span style="color:#FFD700">{</span></div><div class="cl" style="top:1111.30px"><span style="color:#D4D4D4">                </span><span style="color:#9CDCFE">currentIndex</span><span style="color:#D4D4D4"> = </span><span style="color:#9CDCFE">currentIndex</span><span style="color:#D4D4D4"> + </span><span style="color:#B5CEA8">1</span><span style="color:#D4D4D4">;</span></div><div class="cl" style="top:1139.80px"><span style="color:#D4D4D4">            </span><span style="color:#FFD700">}</span></div>
<svg class="a" style="left:433.5px;top:370px" width="17" height="21" viewBox="0 0 17 21"><path d="M8.5 1 a7 7 0 0 1 4.2 12.6 V16 H4.3 V13.6 A7 7 0 0 1 8.5 1Z" fill="#f4ca42"/><rect x="4.8" y="16" width="7.4" height="4.2" fill="#f4ca42"/><rect x="7.3" y="16.2" width="2.4" height="2.6" fill="#1e1e1e"/></svg>
<div class="a" style="left:1264.8px;top:628px;width:2.6px;height:25px;background:#aeafad"></div>
</div>
<div class="a" style="left:0;top:0;width:2093px;height:4px;background:linear-gradient(rgba(0,0,0,0.45),rgba(0,0,0,0.12) 50%,rgba(0,0,0,0))"></div>
</div>
<div class="a" style="left:2428px;top:239px;width:112px;height:20px;background:#243a56"></div><div class="a" style="left:2435.0px;top:239px;width:42.0px;height:2px;background:#2c4f80"></div><div class="a" style="left:2427.9px;top:241px;width:75.1px;height:2px;background:#2c4f80"></div><div class="a" style="left:2427.9px;top:243px;width:63.2px;height:2px;background:#2c4f80"></div><div class="a" style="left:2427.9px;top:245px;width:71.9px;height:2px;background:#2c4f80"></div><div class="a" style="left:2427.9px;top:247px;width:68.0px;height:2px;background:#2c4f80"></div><div class="a" style="left:2427.9px;top:249px;width:50.0px;height:2px;background:#2c4f80"></div><div class="a" style="left:2427.9px;top:251px;width:25.0px;height:2px;background:#2c4f80"></div><div class="a" style="left:2427.9px;top:253px;width:13.1px;height:2px;background:#2c4f80"></div><div class="a" style="left:2427.9px;top:255px;width:79.0px;height:2px;background:#2c4f80"></div><div class="a" style="left:2427.9px;top:257px;width:73.1px;height:2px;background:#2c4f80"></div><div class="a" style="left:2427.9px;top:123.2px;width:59.8px;height:1.4px;background:#6A9955;opacity:0.36"></div><div class="a" style="left:2427.9px;top:125.2px;width:34.0px;height:1.4px;background:#6A9955;opacity:0.36"></div><div class="a" style="left:2427.9px;top:127.2px;width:6.1px;height:1.4px;background:#569CD6;opacity:0.36"></div><div class="a" style="left:2435.2px;top:127.2px;width:3.9px;height:1.4px;background:#4EC9B0;opacity:0.36"></div><div class="a" style="left:2440.1px;top:127.2px;width:3.9px;height:1.4px;background:#4EC9B0;opacity:0.36"></div><div class="a" style="left:2444.9px;top:127.2px;width:2.2px;height:1.4px;background:#4EC9B0;opacity:0.36"></div><div class="a" style="left:2427.9px;top:129.2px;width:6.1px;height:1.4px;background:#569CD6;opacity:0.36"></div><div class="a" style="left:2435.2px;top:129.2px;width:3.9px;height:1.4px;background:#4EC9B0;opacity:0.36"></div><div class="a" style="left:2440.1px;top:129.2px;width:3.9px;height:1.4px;background:#4EC9B0;opacity:0.36"></div><div class="a" style="left:2444.9px;top:129.2px;width:9.2px;height:1.4px;background:#4EC9B0;opacity:0.36"></div><div class="a" style="left:2427.9px;top:131.2px;width:6.1px;height:1.4px;background:#569CD6;opacity:0.36"></div><div class="a" style="left:2435.2px;top:131.2px;width:3.9px;height:1.4px;background:#4EC9B0;opacity:0.36"></div><div class="a" style="left:2440.1px;top:131.2px;width:3.9px;height:1.4px;background:#4EC9B0;opacity:0.36"></div><div class="a" style="left:2444.9px;top:131.2px;width:9.2px;height:1.4px;background:#4EC9B0;opacity:0.36"></div><div class="a" style="left:2427.9px;top:133.2px;width:6.1px;height:1.4px;background:#569CD6;opacity:0.36"></div><div class="a" style="left:2435.2px;top:133.2px;width:3.9px;height:1.4px;background:#4EC9B0;opacity:0.36"></div><div class="a" style="left:2440.1px;top:133.2px;width:3.9px;height:1.4px;background:#4EC9B0;opacity:0.36"></div><div class="a" style="left:2444.9px;top:133.2px;width:8.3px;height:1.4px;background:#4EC9B0;opacity:0.36"></div><div class="a" style="left:2427.9px;top:135.2px;width:6.1px;height:1.4px;background:#569CD6;opacity:0.36"></div><div class="a" style="left:2435.2px;top:135.2px;width:3.9px;height:1.4px;background:#4EC9B0;opacity:0.36"></div><div class="a" style="left:2440.1px;top:135.2px;width:3.9px;height:1.4px;background:#4EC9B0;opacity:0.36"></div><div class="a" style="left:2444.9px;top:135.2px;width:9.2px;height:1.4px;background:#4EC9B0;opacity:0.36"></div><div class="a" style="left:2427.9px;top:137.2px;width:6.1px;height:1.4px;background:#569CD6;opacity:0.36"></div><div class="a" style="left:2435.2px;top:137.2px;width:3.9px;height:1.4px;background:#4EC9B0;opacity:0.36"></div><div class="a" style="left:2440.1px;top:137.2px;width:3.9px;height:1.4px;background:#4EC9B0;opacity:0.36"></div><div class="a" style="left:2444.9px;top:137.2px;width:7.3px;height:1.4px;background:#4EC9B0;opacity:0.36"></div><div class="a" style="left:2427.9px;top:139.2px;width:6.1px;height:1.4px;background:#569CD6;opacity:0.36"></div><div class="a" style="left:2435.2px;top:139.2px;width:3.9px;height:1.4px;background:#4EC9B0;opacity:0.36"></div><div class="a" style="left:2440.1px;top:139.2px;width:3.9px;height:1.4px;background:#4EC9B0;opacity:0.36"></div><div class="a" style="left:2444.9px;top:139.2px;width:4.4px;height:1.4px;background:#4EC9B0;opacity:0.36"></div><div class="a" style="left:2427.9px;top:141.2px;width:6.1px;height:1.4px;background:#569CD6;opacity:0.36"></div><div class="a" style="left:2435.2px;top:141.2px;width:3.9px;height:1.4px;background:#4EC9B0;opacity:0.36"></div><div class="a" style="left:2440.1px;top:141.2px;width:3.9px;height:1.4px;background:#4EC9B0;opacity:0.36"></div><div class="a" style="left:2444.9px;top:141.2px;width:3.9px;height:1.4px;background:#4EC9B0;opacity:0.36"></div><div class="a" style="left:2427.9px;top:145.2px;width:6.1px;height:1.4px;background:#569CD6;opacity:0.36"></div><div class="a" style="left:2435.2px;top:145.2px;width:4.6px;height:1.4px;background:#569CD6;opacity:0.36"></div><div class="a" style="left:2441.0px;top:145.2px;width:13.1px;height:1.4px;background:#4EC9B0;opacity:0.36"></div><div class="a" style="left:2454.9px;top:145.2px;width:1.2px;height:1.4px;background:#D4D4D4;opacity:0.36"></div><div class="a" style="left:2432.0px;top:149.2px;width:5.8px;height:1.4px;background:#569CD6;opacity:0.36"></div><div class="a" style="left:2439.1px;top:149.2px;width:2.9px;height:1.4px;background:#4EC9B0;opacity:0.36"></div><div class="a" style="left:2443.0px;top:149.2px;width:14.6px;height:1.4px;background:#DCDCAA;opacity:0.36"></div><div class="a" style="left:2458.0px;top:149.2px;width:5.8px;height:1.4px;background:#4EC9B0;opacity:0.36"></div><div class="a" style="left:2464.8px;top:149.2px;width:8.7px;height:1.4px;background:#9CDCFE;opacity:0.36"></div><div class="a" style="left:2475.0px;top:149.2px;width:2.9px;height:1.4px;background:#4EC9B0;opacity:0.36"></div><div class="a" style="left:2478.9px;top:149.2px;width:9.7px;height:1.4px;background:#9CDCFE;opacity:0.36"></div><div class="a" style="left:2489.9px;top:149.2px;width:1.2px;height:1.4px;background:#D4D4D4;opacity:0.36"></div><div class="a" style="left:2436.1px;top:151.2px;width:3.0px;height:1.4px;background:#4EC9B0;opacity:0.36"></div><div class="a" style="left:2440.1px;top:151.2px;width:9.2px;height:1.4px;background:#9CDCFE;opacity:0.36"></div><div class="a" style="left:2450.3px;top:151.2px;width:1.9px;height:1.4px;background:#D4D4D4;opacity:0.36"></div><div class="a" style="left:2453.2px;top:151.2px;width:8.7px;height:1.4px;background:#9CDCFE;opacity:0.36"></div><div class="a" style="left:2462.9px;top:151.2px;width:1.0px;height:1.4px;background:#D4D4D4;opacity:0.36"></div><div class="a" style="left:2464.8px;top:151.2px;width:1.9px;height:1.4px;background:#B5CEA8;opacity:0.36"></div><div class="a" style="left:2436.1px;top:153.2px;width:3.0px;height:1.4px;background:#4EC9B0;opacity:0.36"></div><div class="a" style="left:2440.1px;top:153.2px;width:14.1px;height:1.4px;background:#9CDCFE;opacity:0.36"></div><div class="a" style="left:2455.1px;top:153.2px;width:1.0px;height:1.4px;background:#D4D4D4;opacity:0.36"></div><div class="a" style="left:2456.6px;top:153.2px;width:1.5px;height:1.4px;background:#B5CEA8;opacity:0.36"></div><div class="a" style="left:2436.1px;top:155.2px;width:5.0px;height:1.4px;background:#C586C0;opacity:0.36"></div><div class="a" style="left:2442.0px;top:155.2px;width:15.1px;height:1.4px;background:#9CDCFE;opacity:0.36"></div><div class="a" style="left:2458.0px;top:155.2px;width:5.3px;height:1.4px;background:#D4D4D4;opacity:0.36"></div><div class="a" style="left:2464.8px;top:155.2px;width:10.2px;height:1.4px;background:#9CDCFE;opacity:0.36"></div><div class="a" style="left:2476.0px;top:155.2px;width:1.0px;height:1.4px;background:#D4D4D4;opacity:0.36"></div><div class="a" style="left:2478.0px;top:155.2px;width:7.8px;height:1.4px;background:#9CDCFE;opacity:0.36"></div><div class="a" style="left:2486.7px;top:155.2px;width:9.2px;height:1.4px;background:#DCDCAA;opacity:0.36"></div><div class="a" style="left:2496.9px;top:155.2px;width:1.0px;height:1.4px;background:#D4D4D4;opacity:0.36"></div><div class="a" style="left:2440.1px;top:157.2px;width:1.9px;height:1.4px;background:#C586C0;opacity:0.36"></div><div class="a" style="left:2443.0px;top:157.2px;width:9.2px;height:1.4px;background:#9CDCFE;opacity:0.36"></div><div class="a" style="left:2453.2px;top:157.2px;width:6.8px;height:1.4px;background:#DCDCAA;opacity:0.36"></div><div class="a" style="left:2460.0px;top:157.2px;width:10.7px;height:1.4px;background:#9CDCFE;opacity:0.36"></div><div class="a" style="left:2471.6px;top:157.2px;width:2.4px;height:1.4px;background:#D4D4D4;opacity:0.36"></div><div class="a" style="left:2475.0px;top:157.2px;width:3.4px;height:1.4px;background:#CE9178;opacity:0.36"></div><div class="a" style="left:2478.9px;top:157.2px;width:1.9px;height:1.4px;background:#D4D4D4;opacity:0.36"></div><div class="a" style="left:2444.0px;top:159.2px;width:14.6px;height:1.4px;background:#9CDCFE;opacity:0.36"></div><div class="a" style="left:2458.5px;top:159.2px;width:1.9px;height:1.4px;background:#D4D4D4;opacity:0.36"></div><div class="a" style="left:2440.1px;top:161.2px;width:1.0px;height:1.4px;background:#D4D4D4;opacity:0.36"></div><div class="a" style="left:2442.0px;top:161.2px;width:3.9px;height:1.4px;background:#C586C0;opacity:0.36"></div><div class="a" style="left:2447.1px;top:161.2px;width:1.7px;height:1.4px;background:#C586C0;opacity:0.36"></div><div class="a" style="left:2450.3px;top:161.2px;width:8.7px;height:1.4px;background:#9CDCFE;opacity:0.36"></div><div class="a" style="left:2460.0px;top:161.2px;width:6.8px;height:1.4px;background:#DCDCAA;opacity:0.36"></div><div class="a" style="left:2466.8px;top:161.2px;width:10.7px;height:1.4px;background:#9CDCFE;opacity:0.36"></div><div class="a" style="left:2478.4px;top:161.2px;width:2.4px;height:1.4px;background:#D4D4D4;opacity:0.36"></div><div class="a" style="left:2481.9px;top:161.2px;width:2.9px;height:1.4px;background:#CE9178;opacity:0.36"></div><div class="a" style="left:2485.3px;top:161.2px;width:2.9px;height:1.4px;background:#D4D4D4;opacity:0.36"></div><div class="a" style="left:2444.0px;top:163.2px;width:15.1px;height:1.4px;background:#9CDCFE;opacity:0.36"></div><div class="a" style="left:2459.0px;top:163.2px;width:1.9px;height:1.4px;background:#D4D4D4;opacity:0.36"></div><div class="a" style="left:2440.1px;top:165.2px;width:1.0px;height:1.4px;background:#D4D4D4;opacity:0.36"></div><div class="a" style="left:2440.1px;top:167.2px;width:11.2px;height:1.4px;background:#9CDCFE;opacity:0.36"></div><div class="a" style="left:2451.2px;top:167.2px;width:1.5px;height:1.4px;background:#D4D4D4;opacity:0.36"></div><div class="a" style="left:2436.1px;top:169.2px;width:1.1px;height:1.4px;background:#D4D4D4;opacity:0.36"></div><div class="a" style="left:2436.1px;top:171.2px;width:2.0px;height:1.4px;background:#C586C0;opacity:0.36"></div><div class="a" style="left:2438.6px;top:171.2px;width:14.6px;height:1.4px;background:#9CDCFE;opacity:0.36"></div><div class="a" style="left:2454.2px;top:171.2px;width:1.9px;height:1.4px;background:#D4D4D4;opacity:0.36"></div><div class="a" style="left:2457.1px;top:171.2px;width:1.5px;height:1.4px;background:#B5CEA8;opacity:0.36"></div><div class="a" style="left:2459.7px;top:171.2px;width:1.2px;height:1.4px;background:#D4D4D4;opacity:0.36"></div><div class="a" style="left:2438.1px;top:173.2px;width:5.8px;height:1.4px;background:#C586C0;opacity:0.36"></div><div class="a" style="left:2444.9px;top:173.2px;width:10.0px;height:1.4px;background:#9CDCFE;opacity:0.36"></div><div class="a" style="left:2456.1px;top:173.2px;width:1.0px;height:1.4px;background:#D4D4D4;opacity:0.36"></div><div class="a" style="left:2458.0px;top:173.2px;width:1.5px;height:1.4px;background:#B5CEA8;opacity:0.36"></div><div class="a" style="left:2436.1px;top:175.2px;width:1.1px;height:1.4px;background:#D4D4D4;opacity:0.36"></div><div class="a" style="left:2436.1px;top:177.2px;width:4.0px;height:1.4px;background:#C586C0;opacity:0.36"></div><div class="a" style="left:2441.0px;top:177.2px;width:1.0px;height:1.4px;background:#D4D4D4;opacity:0.36"></div><div class="a" style="left:2438.1px;top:179.2px;width:5.8px;height:1.4px;background:#C586C0;opacity:0.36"></div><div class="a" style="left:2444.9px;top:179.2px;width:2.9px;height:1.4px;background:#B5CEA8;opacity:0.36"></div><div class="a" style="left:2436.1px;top:181.2px;width:1.1px;height:1.4px;background:#D4D4D4;opacity:0.36"></div><div class="a" style="left:2432.0px;top:185.2px;width:1.0px;height:1.4px;background:#D4D4D4;opacity:0.36"></div><div class="a" style="left:2432.0px;top:187.2px;width:5.8px;height:1.4px;background:#569CD6;opacity:0.36"></div><div class="a" style="left:2439.1px;top:187.2px;width:5.6px;height:1.4px;background:#569CD6;opacity:0.36"></div><div class="a" style="left:2445.9px;top:187.2px;width:10.7px;height:1.4px;background:#4EC9B0;opacity:0.36"></div><div class="a" style="left:2458.0px;top:187.2px;width:12.6px;height:1.4px;background:#4EC9B0;opacity:0.36"></div><div class="a" style="left:2471.9px;top:187.2px;width:8.5px;height:1.4px;background:#DCDCAA;opacity:0.36"></div><div class="a" style="left:2480.9px;top:187.2px;width:3.9px;height:1.4px;background:#4EC9B0;opacity:0.36"></div><div class="a" style="left:2486.0px;top:187.2px;width:9.5px;height:1.4px;background:#9CDCFE;opacity:0.36"></div><div class="a" style="left:2496.9px;top:187.2px;width:5.8px;height:1.4px;background:#569CD6;opacity:0.36"></div><div class="a" style="left:2432.0px;top:189.2px;width:10.9px;height:1.4px;background:#4EC9B0;opacity:0.36"></div><div class="a" style="left:2444.0px;top:189.2px;width:1.0px;height:1.4px;background:#D4D4D4;opacity:0.36"></div><div class="a" style="left:2436.1px;top:191.2px;width:24.9px;height:1.4px;background:#4EC9B0;opacity:0.36"></div><div class="a" style="left:2461.9px;top:191.2px;width:5.8px;height:1.4px;background:#9CDCFE;opacity:0.36"></div><div class="a" style="left:2468.7px;top:191.2px;width:1.0px;height:1.4px;background:#D4D4D4;opacity:0.36"></div><div class="a" style="left:2470.9px;top:191.2px;width:2.9px;height:1.4px;background:#C586C0;opacity:0.36"></div><div class="a" style="left:2475.0px;top:191.2px;width:11.7px;height:1.4px;background:#DCDCAA;opacity:0.36"></div><div class="a" style="left:2436.1px;top:193.2px;width:2.0px;height:1.4px;background:#C586C0;opacity:0.36"></div><div class="a" style="left:2438.6px;top:193.2px;width:9.2px;height:1.4px;background:#9CDCFE;opacity:0.36"></div><div class="a" style="left:2448.8px;top:193.2px;width:14.1px;height:1.4px;background:#DCDCAA;opacity:0.36"></div><div class="a" style="left:2463.9px;top:193.2px;width:1.0px;height:1.4px;background:#D4D4D4;opacity:0.36"></div><div class="a" style="left:2440.1px;top:195.2px;width:3.4px;height:1.4px;background:#C586C0;opacity:0.36"></div><div class="a" style="left:2444.0px;top:195.2px;width:3.9px;height:1.4px;background:#4EC9B0;opacity:0.36"></div><div class="a" style="left:2448.8px;top:195.2px;width:1.5px;height:1.4px;background:#9CDCFE;opacity:0.36"></div><div class="a" style="left:2451.2px;top:195.2px;width:1.0px;height:1.4px;background:#D4D4D4;opacity:0.36"></div><div class="a" style="left:2452.0px;top:195.2px;width:9.0px;height:1.4px;background:#9CDCFE;opacity:0.36"></div><div class="a" style="left:2461.9px;top:195.2px;width:11.7px;height:1.4px;background:#DCDCAA;opacity:0.36"></div><div class="a" style="left:2475.0px;top:195.2px;width:1.0px;height:1.4px;background:#D4D4D4;opacity:0.36"></div><div class="a" style="left:2444.2px;top:197.2px;width:5.8px;height:1.4px;background:#9CDCFE;opacity:0.36"></div><div class="a" style="left:2451.0px;top:197.2px;width:19.7px;height:1.4px;background:#DCDCAA;opacity:0.36"></div><div class="a" style="left:2440.1px;top:199.2px;width:1.0px;height:1.4px;background:#D4D4D4;opacity:0.36"></div><div class="a" style="left:2440.1px;top:201.2px;width:5.8px;height:1.4px;background:#C586C0;opacity:0.36"></div><div class="a" style="left:2447.1px;top:201.2px;width:6.6px;height:1.4px;background:#9CDCFE;opacity:0.36"></div><div class="a" style="left:2436.1px;top:203.2px;width:1.1px;height:1.4px;background:#D4D4D4;opacity:0.36"></div><div class="a" style="left:2436.1px;top:205.2px;width:4.0px;height:1.4px;background:#C586C0;opacity:0.36"></div><div class="a" style="left:2441.0px;top:205.2px;width:1.0px;height:1.4px;background:#D4D4D4;opacity:0.36"></div><div class="a" style="left:2440.1px;top:207.2px;width:3.9px;height:1.4px;background:#4EC9B0;opacity:0.36"></div><div class="a" style="left:2444.9px;top:207.2px;width:1.5px;height:1.4px;background:#9CDCFE;opacity:0.36"></div><div class="a" style="left:2447.4px;top:207.2px;width:1.0px;height:1.4px;background:#D4D4D4;opacity:0.36"></div><div class="a" style="left:2448.8px;top:207.2px;width:3.4px;height:1.4px;background:#4EC9B0;opacity:0.36"></div><div class="a" style="left:2452.2px;top:207.2px;width:6.8px;height:1.4px;background:#DCDCAA;opacity:0.36"></div><div class="a" style="left:2459.0px;top:207.2px;width:8.7px;height:1.4px;background:#9CDCFE;opacity:0.36"></div><div class="a" style="left:2440.1px;top:209.2px;width:3.9px;height:1.4px;background:#4EC9B0;opacity:0.36"></div><div class="a" style="left:2444.2px;top:209.2px;width:6.8px;height:1.4px;background:#9CDCFE;opacity:0.36"></div><div class="a" style="left:2452.2px;top:209.2px;width:1.0px;height:1.4px;background:#D4D4D4;opacity:0.36"></div><div class="a" style="left:2453.7px;top:209.2px;width:2.4px;height:1.4px;background:#4EC9B0;opacity:0.36"></div><div class="a" style="left:2456.1px;top:209.2px;width:10.7px;height:1.4px;background:#DCDCAA;opacity:0.36"></div><div class="a" style="left:2466.8px;top:209.2px;width:21.4px;height:1.4px;background:#9CDCFE;opacity:0.36"></div><div class="a" style="left:2440.1px;top:211.2px;width:1.9px;height:1.4px;background:#C586C0;opacity:0.36"></div><div class="a" style="left:2442.5px;top:211.2px;width:7.3px;height:1.4px;background:#9CDCFE;opacity:0.36"></div><div class="a" style="left:2450.8px;top:211.2px;width:1.9px;height:1.4px;background:#D4D4D4;opacity:0.36"></div><div class="a" style="left:2454.2px;top:211.2px;width:1.9px;height:1.4px;background:#B5CEA8;opacity:0.36"></div><div class="a" style="left:2457.1px;top:211.2px;width:2.9px;height:1.4px;background:#D4D4D4;opacity:0.36"></div><div class="a" style="left:2461.0px;top:211.2px;width:12.6px;height:1.4px;background:#9CDCFE;opacity:0.36"></div><div class="a" style="left:2473.6px;top:211.2px;width:9.7px;height:1.4px;background:#DCDCAA;opacity:0.36"></div><div class="a" style="left:2483.8px;top:211.2px;width:8.3px;height:1.4px;background:#9CDCFE;opacity:0.36"></div><div class="a" style="left:2493.0px;top:211.2px;width:5.8px;height:1.4px;background:#DCDCAA;opacity:0.36"></div><div class="a" style="left:2440.1px;top:213.2px;width:9.2px;height:1.4px;background:#9CDCFE;opacity:0.36"></div><div class="a" style="left:2449.3px;top:213.2px;width:2.9px;height:1.4px;background:#D4D4D4;opacity:0.36"></div><div class="a" style="left:2452.7px;top:213.2px;width:3.4px;height:1.4px;background:#CE9178;opacity:0.36"></div><div class="a" style="left:2457.1px;top:213.2px;width:2.9px;height:1.4px;background:#D4D4D4;opacity:0.36"></div><div class="a" style="left:2444.2px;top:215.2px;width:5.8px;height:1.4px;background:#C586C0;opacity:0.36"></div><div class="a" style="left:2451.0px;top:215.2px;width:7.0px;height:1.4px;background:#9CDCFE;opacity:0.36"></div><div class="a" style="left:2440.1px;top:217.2px;width:1.0px;height:1.4px;background:#D4D4D4;opacity:0.36"></div><div class="a" style="left:2440.1px;top:219.2px;width:16.5px;height:1.4px;background:#4EC9B0;opacity:0.36"></div><div class="a" style="left:2458.0px;top:219.2px;width:4.9px;height:1.4px;background:#9CDCFE;opacity:0.36"></div><div class="a" style="left:2463.9px;top:219.2px;width:1.0px;height:1.4px;background:#D4D4D4;opacity:0.36"></div><div class="a" style="left:2465.8px;top:219.2px;width:14.1px;height:1.4px;background:#DCDCAA;opacity:0.36"></div><div class="a" style="left:2480.9px;top:219.2px;width:11.2px;height:1.4px;background:#9CDCFE;opacity:0.36"></div><div class="a" style="left:2492.5px;top:219.2px;width:3.4px;height:1.4px;background:#D4D4D4;opacity:0.36"></div><div class="a" style="left:2440.1px;top:221.2px;width:5.8px;height:1.4px;background:#9CDCFE;opacity:0.36"></div><div class="a" style="left:2446.9px;top:221.2px;width:4.4px;height:1.4px;background:#DCDCAA;opacity:0.36"></div><div class="a" style="left:2451.2px;top:221.2px;width:8.7px;height:1.4px;background:#9CDCFE;opacity:0.36"></div><div class="a" style="left:2461.0px;top:221.2px;width:7.3px;height:1.4px;background:#DCDCAA;opacity:0.36"></div><div class="a" style="left:2471.9px;top:221.2px;width:7.0px;height:1.4px;background:#9CDCFE;opacity:0.36"></div><div class="a" style="left:2478.9px;top:221.2px;width:1.0px;height:1.4px;background:#D4D4D4;opacity:0.36"></div><div class="a" style="left:2440.1px;top:223.2px;width:5.8px;height:1.4px;background:#C586C0;opacity:0.36"></div><div class="a" style="left:2446.9px;top:223.2px;width:6.8px;height:1.4px;background:#9CDCFE;opacity:0.36"></div><div class="a" style="left:2436.1px;top:225.2px;width:1.1px;height:1.4px;background:#D4D4D4;opacity:0.36"></div><div class="a" style="left:2432.0px;top:227.2px;width:1.0px;height:1.4px;background:#D4D4D4;opacity:0.36"></div><div class="a" style="left:2432.0px;top:229.2px;width:5.8px;height:1.4px;background:#569CD6;opacity:0.36"></div><div class="a" style="left:2439.1px;top:229.2px;width:5.6px;height:1.4px;background:#569CD6;opacity:0.36"></div><div class="a" style="left:2445.9px;top:229.2px;width:16.5px;height:1.4px;background:#4EC9B0;opacity:0.36"></div><div class="a" style="left:2463.9px;top:229.2px;width:8.7px;height:1.4px;background:#DCDCAA;opacity:0.36"></div><div class="a" style="left:2472.6px;top:229.2px;width:6.3px;height:1.4px;background:#4EC9B0;opacity:0.36"></div><div class="a" style="left:2479.9px;top:229.2px;width:8.7px;height:1.4px;background:#9CDCFE;opacity:0.36"></div><div class="a" style="left:2490.1px;top:229.2px;width:1.0px;height:1.4px;background:#D4D4D4;opacity:0.36"></div><div class="a" style="left:2436.1px;top:231.2px;width:16.6px;height:1.4px;background:#4EC9B0;opacity:0.36"></div><div class="a" style="left:2453.9px;top:231.2px;width:8.0px;height:1.4px;background:#9CDCFE;opacity:0.36"></div><div class="a" style="left:2462.9px;top:231.2px;width:1.0px;height:1.4px;background:#D4D4D4;opacity:0.36"></div><div class="a" style="left:2465.1px;top:231.2px;width:2.9px;height:1.4px;background:#C586C0;opacity:0.36"></div><div class="a" style="left:2469.2px;top:231.2px;width:9.2px;height:1.4px;background:#4EC9B0;opacity:0.36"></div><div class="a" style="left:2478.4px;top:231.2px;width:4.4px;height:1.4px;background:#D4D4D4;opacity:0.36"></div><div class="a" style="left:2436.1px;top:233.2px;width:68.9px;height:1.4px;background:#6A9955;opacity:0.36"></div><div class="a" style="left:2436.1px;top:235.2px;width:12.7px;height:1.4px;background:#6A9955;opacity:0.36"></div><div class="a" style="left:2436.1px;top:237.2px;width:3.0px;height:1.4px;background:#4EC9B0;opacity:0.36"></div><div class="a" style="left:2440.1px;top:237.2px;width:11.9px;height:1.4px;background:#9CDCFE;opacity:0.36"></div><div class="a" style="left:2453.2px;top:237.2px;width:1.0px;height:1.4px;background:#D4D4D4;opacity:0.36"></div><div class="a" style="left:2455.1px;top:237.2px;width:1.7px;height:1.4px;background:#B5CEA8;opacity:0.36"></div><div class="a" style="left:2440.1px;top:261.2px;width:62.0px;height:1.4px;background:#6A9955;opacity:0.36"></div><div class="a" style="left:2440.1px;top:263.2px;width:2.9px;height:1.4px;background:#4EC9B0;opacity:0.36"></div><div class="a" style="left:2444.2px;top:263.2px;width:10.0px;height:1.4px;background:#9CDCFE;opacity:0.36"></div><div class="a" style="left:2455.1px;top:263.2px;width:1.0px;height:1.4px;background:#D4D4D4;opacity:0.36"></div><div class="a" style="left:2457.1px;top:263.2px;width:14.6px;height:1.4px;background:#DCDCAA;opacity:0.36"></div><div class="a" style="left:2471.9px;top:263.2px;width:9.0px;height:1.4px;background:#9CDCFE;opacity:0.36"></div><div class="a" style="left:2481.9px;top:263.2px;width:10.7px;height:1.4px;background:#9CDCFE;opacity:0.36"></div><div class="a" style="left:2440.1px;top:267.2px;width:1.7px;height:1.4px;background:#C586C0;opacity:0.36"></div><div class="a" style="left:2442.2px;top:267.2px;width:15.8px;height:1.4px;background:#9CDCFE;opacity:0.36"></div><div class="a" style="left:2459.0px;top:267.2px;width:8.3px;height:1.4px;background:#D4D4D4;opacity:0.36"></div><div class="a" style="left:2467.8px;top:267.2px;width:16.3px;height:1.4px;background:#9CDCFE;opacity:0.36"></div><div class="a" style="left:2485.3px;top:267.2px;width:1.9px;height:1.4px;background:#D4D4D4;opacity:0.36"></div><div class="a" style="left:2488.2px;top:267.2px;width:1.9px;height:1.4px;background:#B5CEA8;opacity:0.36"></div><div class="a" style="left:2445.9px;top:269.2px;width:1.9px;height:1.4px;background:#D4D4D4;opacity:0.36"></div><div class="a" style="left:2449.3px;top:269.2px;width:9.7px;height:1.4px;background:#9CDCFE;opacity:0.36"></div><div class="a" style="left:2460.0px;top:269.2px;width:7.8px;height:1.4px;background:#D4D4D4;opacity:0.36"></div><div class="a" style="left:2468.7px;top:269.2px;width:9.2px;height:1.4px;background:#9CDCFE;opacity:0.36"></div><div class="a" style="left:2478.9px;top:269.2px;width:8.3px;height:1.4px;background:#D4D4D4;opacity:0.36"></div><div class="a" style="left:2444.2px;top:271.2px;width:5.8px;height:1.4px;background:#C586C0;opacity:0.36"></div><div class="a" style="left:2451.0px;top:271.2px;width:9.0px;height:1.4px;background:#9CDCFE;opacity:0.36"></div><div class="a" style="left:2440.1px;top:273.2px;width:1.0px;height:1.4px;background:#D4D4D4;opacity:0.36"></div><div class="a" style="left:2440.1px;top:275.2px;width:5.8px;height:1.4px;background:#4EC9B0;opacity:0.36"></div><div class="a" style="left:2447.1px;top:275.2px;width:12.9px;height:1.4px;background:#9CDCFE;opacity:0.36"></div><div class="a" style="left:2461.4px;top:275.2px;width:1.0px;height:1.4px;background:#D4D4D4;opacity:0.36"></div><div class="a" style="left:2463.1px;top:275.2px;width:7.8px;height:1.4px;background:#9CDCFE;opacity:0.36"></div><div class="a" style="left:2471.9px;top:275.2px;width:9.2px;height:1.4px;background:#DCDCAA;opacity:0.36"></div><div class="a" style="left:2481.9px;top:275.2px;width:9.0px;height:1.4px;background:#9CDCFE;opacity:0.36"></div><div class="a" style="left:2492.1px;top:275.2px;width:3.9px;height:1.4px;background:#D4D4D4;opacity:0.36"></div><div class="a" style="left:2496.9px;top:275.2px;width:10.7px;height:1.4px;background:#9CDCFE;opacity:0.36"></div><div class="a" style="left:2440.1px;top:277.2px;width:1.0px;height:1.4px;background:#D4D4D4;opacity:0.36"></div><div class="a" style="left:2441.0px;top:277.2px;width:3.9px;height:1.4px;background:#DCDCAA;opacity:0.36"></div><div class="a" style="left:2444.9px;top:277.2px;width:2.4px;height:1.4px;background:#D4D4D4;opacity:0.36"></div><div class="a" style="left:2440.1px;top:279.2px;width:1.7px;height:1.4px;background:#C586C0;opacity:0.36"></div><div class="a" style="left:2443.0px;top:279.2px;width:13.1px;height:1.4px;background:#9CDCFE;opacity:0.36"></div><div class="a" style="left:2457.1px;top:279.2px;width:6.8px;height:1.4px;background:#DCDCAA;opacity:0.36"></div><div class="a" style="left:2464.4px;top:279.2px;width:6.8px;height:1.4px;background:#D4D4D4;opacity:0.36"></div><div class="a" style="left:2472.1px;top:279.2px;width:1.5px;height:1.4px;background:#CE9178;opacity:0.36"></div><div class="a" style="left:2475.0px;top:279.2px;width:7.8px;height:1.4px;background:#D4D4D4;opacity:0.36"></div><div class="a" style="left:2484.0px;top:279.2px;width:12.9px;height:1.4px;background:#9CDCFE;opacity:0.36"></div><div class="a" style="left:2497.9px;top:279.2px;width:7.0px;height:1.4px;background:#DCDCAA;opacity:0.36"></div><div class="a" style="left:2440.1px;top:281.2px;width:4.4px;height:1.4px;background:#D4D4D4;opacity:0.36"></div><div class="a" style="left:2444.9px;top:281.2px;width:5.3px;height:1.4px;background:#CE9178;opacity:0.36"></div><div class="a" style="left:2450.8px;top:281.2px;width:9.2px;height:1.4px;background:#D4D4D4;opacity:0.36"></div><div class="a" style="left:2444.2px;top:283.2px;width:7.8px;height:1.4px;background:#9CDCFE;opacity:0.36"></div><div class="a" style="left:2453.2px;top:283.2px;width:2.9px;height:1.4px;background:#DCDCAA;opacity:0.36"></div><div class="a" style="left:2457.1px;top:283.2px;width:13.6px;height:1.4px;background:#9CDCFE;opacity:0.36"></div><div class="a" style="left:2470.7px;top:283.2px;width:1.0px;height:1.4px;background:#D4D4D4;opacity:0.36"></div><div class="a" style="left:2444.2px;top:285.2px;width:11.7px;height:1.4px;background:#9CDCFE;opacity:0.36"></div><div class="a" style="left:2457.1px;top:285.2px;width:1.0px;height:1.4px;background:#D4D4D4;opacity:0.36"></div><div class="a" style="left:2459.0px;top:285.2px;width:10.0px;height:1.4px;background:#9CDCFE;opacity:0.36"></div><div class="a" style="left:2470.2px;top:285.2px;width:1.0px;height:1.4px;background:#D4D4D4;opacity:0.36"></div><div class="a" style="left:2472.1px;top:285.2px;width:1.5px;height:1.4px;background:#B5CEA8;opacity:0.36"></div><div class="a" style="left:2440.1px;top:287.2px;width:1.0px;height:1.4px;background:#D4D4D4;opacity:0.36"></div><div class="a" style="left:2440.1px;top:289.2px;width:3.9px;height:1.4px;background:#C586C0;opacity:0.36"></div><div class="a" style="left:2444.9px;top:289.2px;width:1.0px;height:1.4px;background:#D4D4D4;opacity:0.36"></div><div class="a" style="left:2444.2px;top:291.2px;width:11.7px;height:1.4px;background:#9CDCFE;opacity:0.36"></div><div class="a" style="left:2457.1px;top:291.2px;width:1.0px;height:1.4px;background:#D4D4D4;opacity:0.36"></div><div class="a" style="left:2459.0px;top:291.2px;width:11.9px;height:1.4px;background:#9CDCFE;opacity:0.36"></div><div class="a" style="left:2472.1px;top:291.2px;width:1.0px;height:1.4px;background:#D4D4D4;opacity:0.36"></div><div class="a" style="left:2474.1px;top:291.2px;width:1.5px;height:1.4px;background:#B5CEA8;opacity:0.36"></div><div class="a" style="left:2440.1px;top:293.2px;width:1.0px;height:1.4px;background:#D4D4D4;opacity:0.36"></div><div class="a" style="left:2436.1px;top:295.2px;width:1.1px;height:1.4px;background:#D4D4D4;opacity:0.36"></div><div class="a" style="left:2436.1px;top:297.2px;width:5.7px;height:1.4px;background:#C586C0;opacity:0.36"></div><div class="a" style="left:2443.0px;top:297.2px;width:8.5px;height:1.4px;background:#9CDCFE;opacity:0.36"></div><div class="a" style="left:2432.0px;top:299.2px;width:1.0px;height:1.4px;background:#D4D4D4;opacity:0.36"></div><div class="a" style="left:2432.0px;top:301.2px;width:5.8px;height:1.4px;background:#569CD6;opacity:0.36"></div><div class="a" style="left:2439.1px;top:301.2px;width:5.6px;height:1.4px;background:#569CD6;opacity:0.36"></div><div class="a" style="left:2445.9px;top:301.2px;width:4.1px;height:1.4px;background:#4EC9B0;opacity:0.36"></div><div class="a" style="left:2451.0px;top:301.2px;width:4.6px;height:1.4px;background:#DCDCAA;opacity:0.36"></div><div class="a" style="left:2455.6px;top:301.2px;width:8.3px;height:1.4px;background:#4EC9B0;opacity:0.36"></div><div class="a" style="left:2464.8px;top:301.2px;width:4.9px;height:1.4px;background:#9CDCFE;opacity:0.36"></div><div class="a" style="left:2470.9px;top:301.2px;width:6.1px;height:1.4px;background:#569CD6;opacity:0.36"></div><div class="a" style="left:2478.0px;top:301.2px;width:10.9px;height:1.4px;background:#4EC9B0;opacity:0.36"></div><div class="a" style="left:2490.1px;top:301.2px;width:1.0px;height:1.4px;background:#D4D4D4;opacity:0.36"></div><div class="a" style="left:2436.1px;top:303.2px;width:4.0px;height:1.4px;background:#4EC9B0;opacity:0.36"></div><div class="a" style="left:2441.0px;top:303.2px;width:7.8px;height:1.4px;background:#9CDCFE;opacity:0.36"></div><div class="a" style="left:2449.8px;top:303.2px;width:1.0px;height:1.4px;background:#D4D4D4;opacity:0.36"></div><div class="a" style="left:2452.0px;top:303.2px;width:4.1px;height:1.4px;background:#4EC9B0;opacity:0.36"></div><div class="a" style="left:2457.1px;top:303.2px;width:1.9px;height:1.4px;background:#DCDCAA;opacity:0.36"></div><div class="a" style="left:2460.0px;top:303.2px;width:8.7px;height:1.4px;background:#9CDCFE;opacity:0.36"></div><div class="a" style="left:2436.1px;top:305.2px;width:5.9px;height:1.4px;background:#4EC9B0;opacity:0.36"></div><div class="a" style="left:2443.0px;top:305.2px;width:7.8px;height:1.4px;background:#9CDCFE;opacity:0.36"></div><div class="a" style="left:2451.7px;top:305.2px;width:1.0px;height:1.4px;background:#D4D4D4;opacity:0.36"></div><div class="a" style="left:2454.2px;top:305.2px;width:4.9px;height:1.4px;background:#4EC9B0;opacity:0.36"></div><div class="a" style="left:2460.0px;top:305.2px;width:9.7px;height:1.4px;background:#DCDCAA;opacity:0.36"></div><div class="a" style="left:2470.7px;top:305.2px;width:9.7px;height:1.4px;background:#9CDCFE;opacity:0.36"></div><div class="a" style="left:2436.1px;top:307.2px;width:15.9px;height:1.4px;background:#4EC9B0;opacity:0.36"></div><div class="a" style="left:2454.2px;top:307.2px;width:4.9px;height:1.4px;background:#9CDCFE;opacity:0.36"></div><div class="a" style="left:2460.0px;top:307.2px;width:1.0px;height:1.4px;background:#D4D4D4;opacity:0.36"></div><div class="a" style="left:2461.9px;top:307.2px;width:8.3px;height:1.4px;background:#DCDCAA;opacity:0.36"></div><div class="a" style="left:2470.7px;top:307.2px;width:9.7px;height:1.4px;background:#9CDCFE;opacity:0.36"></div><div class="a" style="left:2436.1px;top:309.2px;width:5.9px;height:1.4px;background:#4EC9B0;opacity:0.36"></div><div class="a" style="left:2443.0px;top:309.2px;width:2.9px;height:1.4px;background:#569CD6;opacity:0.36"></div><div class="a" style="left:2446.9px;top:309.2px;width:7.3px;height:1.4px;background:#DCDCAA;opacity:0.36"></div><div class="a" style="left:2454.9px;top:309.2px;width:6.6px;height:1.4px;background:#9CDCFE;opacity:0.36"></div><div class="a" style="left:2432.0px;top:311.2px;width:1.0px;height:1.4px;background:#D4D4D4;opacity:0.36"></div><div class="a" style="left:2427.9px;top:313.2px;width:1.0px;height:1.4px;background:#D4D4D4;opacity:0.36"></div>
<div class="a" style="left:2540px;top:123px;width:1px;height:1009px;background:#2b2b2b"></div>
<div class="a" style="left:2541px;top:501px;width:19px;height:272px;background:#434343"></div>
<div class="a" style="left:2541px;top:634.5px;width:19px;height:2.5px;background:#8c8c8c"></div>
</body></html>
